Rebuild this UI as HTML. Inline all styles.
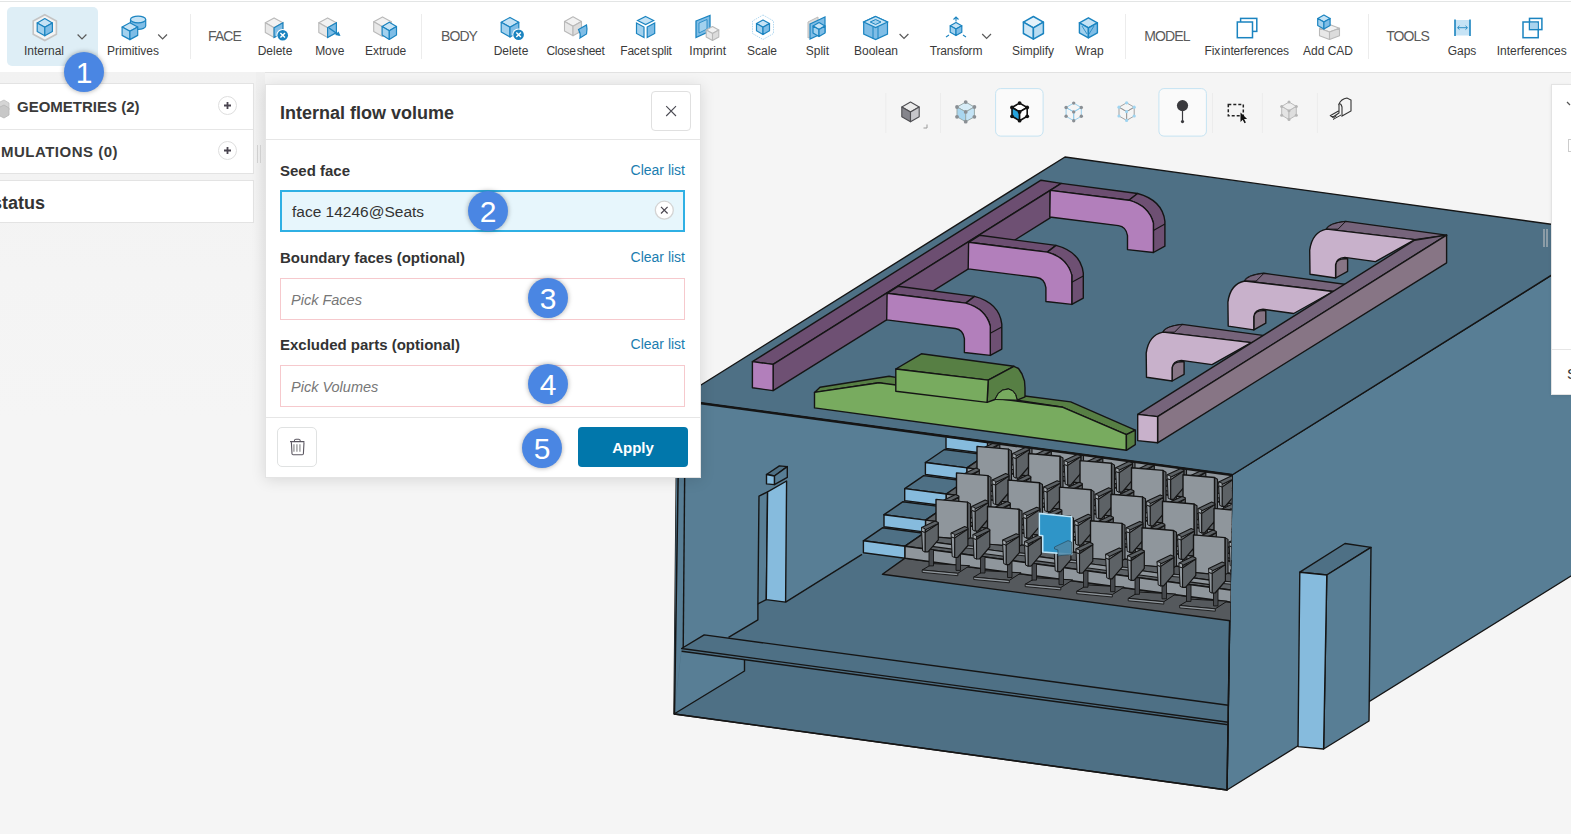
<!DOCTYPE html>
<html><head><meta charset="utf-8">
<style>
*{box-sizing:border-box;margin:0;padding:0}
html,body{width:1571px;height:834px;overflow:hidden;background:#f5f5f5;font-family:"Liberation Sans",sans-serif;color:#333}
.abs{position:absolute}
#tb{position:absolute;left:0;top:0;width:1571px;height:73px;background:#fff;border-bottom:1px solid #e2e2e2}
#tbl{position:absolute;left:0;top:1px;width:1571px;height:1px;background:#e3e5e5}
.lbl{position:absolute;top:44px;font-size:12px;color:#3a3a3a;white-space:nowrap;transform:translateX(-50%)}
.sec{position:absolute;top:28px;font-size:14px;letter-spacing:-0.9px;color:#5a5a5a;white-space:nowrap;transform:translateX(-50%)}
.sep{position:absolute;top:14px;width:1px;height:45px;background:#ececec}
.chev{position:absolute;top:33px;width:7px;height:7px;border-right:1.3px solid #666;border-bottom:1.3px solid #666;transform:rotate(45deg)}
.ico{position:absolute;top:15px;width:26px;height:26px}
#lp{position:absolute;left:0;top:72px;width:265px;height:762px;background:linear-gradient(#f2f2f2,#f4f4f4 200px,#f5f5f5 350px)}
#gut{position:absolute;left:256px;top:72px;width:9px;height:762px;background:linear-gradient(#efefef,#f2f2f2 150px,#f5f5f5 300px)}
#lpc{position:absolute;left:0;top:72px;width:265px;height:300px;overflow:hidden}
.card{position:absolute;left:0;width:254px;background:#fff;border:1px solid #e3e3e3;border-left:none}
.plus{position:absolute;width:19px;height:19px}
#dlg{position:absolute;left:265px;top:84px;width:436px;height:394px;background:#fff;border:1px solid #e4e4e4;box-shadow:0 2px 14px rgba(0,0,0,.12)}
.flabel{position:absolute;left:14px;font-size:15px;font-weight:bold;color:#333;white-space:nowrap}
.clr{position:absolute;right:15px;font-size:14px;color:#1a7db0;white-space:nowrap}
.inp{position:absolute;left:14px;width:405px;height:42px;border:1px solid #f6c9cd;background:#fff}
.ph{position:absolute;left:10px;top:13px;font-size:14.5px;font-style:italic;color:#777}
.badge{position:absolute;width:40px;height:40px;border-radius:50%;background:#4a86e3;color:#fff;font-size:30px;line-height:42px;text-align:center;box-shadow:0 0 5px rgba(0,0,0,.35)}
</style></head><body>

<svg class="abs" style="left:0;top:0" width="1571" height="834" viewBox="0 0 1571 834"><polygon points="1232.0,475.0 1618.0,233.5 1651.0,526.2 1227.0,790.0" fill="#587e95" stroke="#151515" stroke-width="1.4" stroke-linejoin="round" />
<polygon points="677.0,400.0 1065.0,157.0 1618.0,233.5 1232.0,475.0" fill="#4e7085" stroke="#151515" stroke-width="1.4" stroke-linejoin="round" />
<polygon points="677.0,400.0 1232.0,475.0 1227.0,790.0 674.0,714.0" fill="#4e7085" stroke="#151515" stroke-width="1.4" stroke-linejoin="round" />
<polygon points="677.0,400.0 1232.0,475.0 1232.0,560.0 908.0,559.0 862.0,554.3 785.6,602.1 766.3,599.6 757.9,603.8 757.9,619.8 728.5,637.4 681.6,648.5 674.0,714.0" fill="#587e95" stroke="#151515" stroke-width="0" stroke-linejoin="round" />
<polygon points="681.6,651.0 744.5,659.2 744.5,671.0 674.0,714.0" fill="#587e95" stroke="#151515" stroke-width="0" stroke-linejoin="round" />
<polyline points="744.5,659.2 744.5,671.0 674.0,714.0" fill="none" stroke="#151515" stroke-width="1.4" stroke-linejoin="round"/>
<polyline points="862.0,554.3 785.6,602.1" fill="none" stroke="#151515" stroke-width="1.4" stroke-linejoin="round"/>
<polyline points="757.9,603.8 757.9,619.8 728.5,637.4" fill="none" stroke="#151515" stroke-width="1.4" stroke-linejoin="round"/>
<polyline points="685.3,403.0 683.2,648.5" fill="none" stroke="#151515" stroke-width="1.4" stroke-linejoin="round"/>
<polygon points="681.6,648.5 704.2,634.9 1228.3,705.3 1228.2,722.2" fill="#4e7085" stroke="#151515" stroke-width="1.4" stroke-linejoin="round" />
<polyline points="681.6,651.2 1228.2,724.8" fill="none" stroke="#151515" stroke-width="1.6" stroke-linejoin="round"/>
<polyline points="679.3,400.0 674.5,714.0 1227.0,790.0 1232.0,475.0" fill="none" stroke="#151515" stroke-width="1.5" stroke-linejoin="round"/>
<polygon points="759.0,496.1 767.6,491.8 766.3,599.6 757.9,603.8" fill="#587e95" stroke="#151515" stroke-width="1.4" stroke-linejoin="round" />
<polygon points="767.6,491.8 786.6,481.0 785.6,602.1 766.3,599.6" fill="#86bbdd" stroke="#151515" stroke-width="1.4" stroke-linejoin="round" />
<polygon points="766.5,474.5 779.4,465.9 787.3,466.6 774.4,476.0" fill="#4e7085" stroke="#151515" stroke-width="1.4" stroke-linejoin="round" />
<polygon points="774.4,476.0 787.3,466.6 787.3,477.4 774.4,484.6" fill="#587e95" stroke="#151515" stroke-width="1.4" stroke-linejoin="round" />
<polygon points="766.5,474.5 774.4,476.0 774.4,484.6 766.5,483.9" fill="#86bbdd" stroke="#151515" stroke-width="1.4" stroke-linejoin="round" />
<polygon points="1299.8,572.2 1345.0,543.5 1371.0,547.4 1326.8,575.0" fill="#4e7085" stroke="#151515" stroke-width="1.4" stroke-linejoin="round" />
<polygon points="1326.8,575.0 1371.0,547.4 1369.0,721.0 1323.6,749.0" fill="#587e95" stroke="#151515" stroke-width="1.4" stroke-linejoin="round" />
<polygon points="1299.8,572.2 1326.8,575.0 1323.6,749.0 1298.0,746.6" fill="#86bbdd" stroke="#151515" stroke-width="1.4" stroke-linejoin="round" />
<defs><clipPath id="ci"><polygon points="684,403 1232,475 1228,790 674,714"/></clipPath></defs>
<g clip-path="url(#ci)"><polygon points="882.4,574.3 905.0,558.1 1240.0,603.5 1240.0,622.0" fill="#55595d" stroke="#151515" stroke-width="1.4" stroke-linejoin="round" />
<polygon points="966.6,410.3 985.6,397.3 1027.2,402.7 1008.2,415.7" fill="#4e7085" stroke="#151515" stroke-width="1.4" stroke-linejoin="round" />
<polygon points="1008.2,415.7 1027.2,402.7 1240.0,431.4 1240.0,447.0" fill="#5d6266" stroke="#151515" stroke-width="1.4" stroke-linejoin="round" />
<polygon points="966.6,410.3 1008.2,415.7 1008.2,427.7 966.6,422.3" fill="#86bbdd" stroke="#151515" stroke-width="1.4" stroke-linejoin="round" />
<polygon points="1008.2,415.7 1240.0,447.0 1240.0,459.0 1008.2,427.7" fill="#8f969c" stroke="#151515" stroke-width="1.4" stroke-linejoin="round" />
<polygon points="946.0,436.4 965.0,423.4 1006.6,428.8 987.6,441.8" fill="#4e7085" stroke="#151515" stroke-width="1.4" stroke-linejoin="round" />
<polygon points="987.6,441.8 1006.6,428.8 1240.0,460.3 1240.0,475.9" fill="#5d6266" stroke="#151515" stroke-width="1.4" stroke-linejoin="round" />
<polygon points="946.0,436.4 987.6,441.8 987.6,453.8 946.0,448.4" fill="#86bbdd" stroke="#151515" stroke-width="1.4" stroke-linejoin="round" />
<polygon points="987.6,441.8 1240.0,475.9 1240.0,487.9 987.6,453.8" fill="#8f969c" stroke="#151515" stroke-width="1.4" stroke-linejoin="round" />
<polygon points="925.4,462.5 944.4,449.5 986.0,454.9 967.0,467.9" fill="#4e7085" stroke="#151515" stroke-width="1.4" stroke-linejoin="round" />
<polygon points="967.0,467.9 986.0,454.9 1240.0,489.2 1240.0,504.8" fill="#5d6266" stroke="#151515" stroke-width="1.4" stroke-linejoin="round" />
<polygon points="925.4,462.5 967.0,467.9 967.0,479.9 925.4,474.5" fill="#86bbdd" stroke="#151515" stroke-width="1.4" stroke-linejoin="round" />
<polygon points="967.0,467.9 1240.0,504.8 1240.0,516.8 967.0,479.9" fill="#8f969c" stroke="#151515" stroke-width="1.4" stroke-linejoin="round" />
<polygon points="904.7,488.6 923.7,475.6 965.3,481.0 946.3,494.0" fill="#4e7085" stroke="#151515" stroke-width="1.4" stroke-linejoin="round" />
<polygon points="946.3,494.0 965.3,481.0 1240.0,518.1 1240.0,533.6" fill="#5d6266" stroke="#151515" stroke-width="1.4" stroke-linejoin="round" />
<polygon points="904.7,488.6 946.3,494.0 946.3,506.0 904.7,500.6" fill="#86bbdd" stroke="#151515" stroke-width="1.4" stroke-linejoin="round" />
<polygon points="946.3,494.0 1240.0,533.6 1240.0,545.6 946.3,506.0" fill="#8f969c" stroke="#151515" stroke-width="1.4" stroke-linejoin="round" />
<polygon points="884.0,514.7 903.0,501.7 944.6,507.1 925.6,520.1" fill="#4e7085" stroke="#151515" stroke-width="1.4" stroke-linejoin="round" />
<polygon points="925.6,520.1 944.6,507.1 1240.0,547.0 1240.0,562.5" fill="#5d6266" stroke="#151515" stroke-width="1.4" stroke-linejoin="round" />
<polygon points="884.0,514.7 925.6,520.1 925.6,532.1 884.0,526.7" fill="#86bbdd" stroke="#151515" stroke-width="1.4" stroke-linejoin="round" />
<polygon points="925.6,520.1 1240.0,562.5 1240.0,574.5 925.6,532.1" fill="#8f969c" stroke="#151515" stroke-width="1.4" stroke-linejoin="round" />
<polygon points="863.4,540.8 882.4,527.8 924.0,533.2 905.0,546.2" fill="#4e7085" stroke="#151515" stroke-width="1.4" stroke-linejoin="round" />
<polygon points="905.0,546.2 924.0,533.2 1240.0,575.9 1240.0,591.4" fill="#5d6266" stroke="#151515" stroke-width="1.4" stroke-linejoin="round" />
<polygon points="863.4,540.8 905.0,546.2 905.0,558.2 863.4,552.8" fill="#86bbdd" stroke="#151515" stroke-width="1.4" stroke-linejoin="round" />
<polygon points="905.0,546.2 1240.0,591.4 1240.0,603.4 905.0,558.2" fill="#8f969c" stroke="#151515" stroke-width="1.4" stroke-linejoin="round" />
<polygon points="983.7,490.5 994.5,484.1 1031.1,486.2 1019.3,493.8" fill="#55595d" stroke="#151515" stroke-width="1" stroke-linejoin="round" />
<polygon points="983.7,490.5 1019.3,493.8 1019.3,496.2 983.7,492.9" fill="#8f969c" stroke="#151515" stroke-width="0.9" stroke-linejoin="round" />
<polygon points="990.5,469.9 995.0,469.9 995.0,486.4 990.5,486.4" fill="#46494d" stroke="#151515" stroke-width="0.9" stroke-linejoin="round" />
<polygon points="1017.5,474.9 1022.0,474.9 1022.0,490.9 1017.5,490.9" fill="#46494d" stroke="#151515" stroke-width="0.9" stroke-linejoin="round" />
<polygon points="1029.0,422.6 1032.0,424.4 1032.0,457.9 1029.0,459.9" fill="#5d6266" stroke="#151515" stroke-width="1.1" stroke-linejoin="round" />
<polygon points="997.5,419.9 1029.0,422.6 1029.0,459.9 997.5,457.9" fill="#8f969c" stroke="#151515" stroke-width="1.4" stroke-linejoin="round" />
<polygon points="989.5,461.9 997.5,457.4 1028.5,460.4 1019.5,465.9" fill="#5d6266" stroke="#151515" stroke-width="1.1" stroke-linejoin="round" />
<polygon points="989.5,461.9 1019.5,465.9 1019.5,470.4 989.5,466.4" fill="#8f969c" stroke="#151515" stroke-width="1.1" stroke-linejoin="round" />
<polygon points="986.5,452.9 999.8,443.9 999.8,460.4 989.5,472.4 986.5,472.4" fill="#5d6266" stroke="#151515" stroke-width="1.2" stroke-linejoin="round" />
<polygon points="983.1,451.7 986.5,452.9 986.5,472.4 984.1,471.4" fill="#8f969c" stroke="#151515" stroke-width="1.0" stroke-linejoin="round" />
<polygon points="983.1,447.9 996.6,441.5 999.8,442.9 999.8,443.9 986.5,450.4 983.1,449.4" fill="#5d6266" stroke="#151515" stroke-width="1.1" stroke-linejoin="round" />
<polygon points="983.1,447.9 986.5,449.2 986.5,452.9 983.1,451.7" fill="#a4aaaf" stroke="#151515" stroke-width="0.9" stroke-linejoin="round" />
<polygon points="1016.1,458.5 1029.4,449.5 1029.4,466.0 1019.1,478.0 1016.1,478.0" fill="#5d6266" stroke="#151515" stroke-width="1.2" stroke-linejoin="round" />
<polygon points="1012.7,457.3 1016.1,458.5 1016.1,478.0 1013.7,477.0" fill="#8f969c" stroke="#151515" stroke-width="1.0" stroke-linejoin="round" />
<polygon points="1012.7,453.5 1026.2,447.1 1029.4,448.5 1029.4,449.5 1016.1,456.0 1012.7,455.0" fill="#5d6266" stroke="#151515" stroke-width="1.1" stroke-linejoin="round" />
<polygon points="1012.7,453.5 1016.1,454.8 1016.1,458.5 1012.7,457.3" fill="#a4aaaf" stroke="#151515" stroke-width="0.9" stroke-linejoin="round" />
<polygon points="1035.2,497.6 1046.0,491.2 1082.6,493.3 1070.8,500.9" fill="#55595d" stroke="#151515" stroke-width="1" stroke-linejoin="round" />
<polygon points="1035.2,497.6 1070.8,500.9 1070.8,503.3 1035.2,500.0" fill="#8f969c" stroke="#151515" stroke-width="0.9" stroke-linejoin="round" />
<polygon points="1042.0,477.0 1046.5,477.0 1046.5,493.5 1042.0,493.5" fill="#46494d" stroke="#151515" stroke-width="0.9" stroke-linejoin="round" />
<polygon points="1069.0,482.0 1073.5,482.0 1073.5,498.0 1069.0,498.0" fill="#46494d" stroke="#151515" stroke-width="0.9" stroke-linejoin="round" />
<polygon points="1080.5,429.7 1083.5,431.5 1083.5,465.0 1080.5,467.0" fill="#5d6266" stroke="#151515" stroke-width="1.1" stroke-linejoin="round" />
<polygon points="1049.0,427.0 1080.5,429.7 1080.5,467.0 1049.0,465.0" fill="#8f969c" stroke="#151515" stroke-width="1.4" stroke-linejoin="round" />
<polygon points="1041.0,469.0 1049.0,464.5 1080.0,467.5 1071.0,473.0" fill="#5d6266" stroke="#151515" stroke-width="1.1" stroke-linejoin="round" />
<polygon points="1041.0,469.0 1071.0,473.0 1071.0,477.5 1041.0,473.5" fill="#8f969c" stroke="#151515" stroke-width="1.1" stroke-linejoin="round" />
<polygon points="1038.0,460.0 1051.3,451.0 1051.3,467.5 1041.0,479.5 1038.0,479.5" fill="#5d6266" stroke="#151515" stroke-width="1.2" stroke-linejoin="round" />
<polygon points="1034.6,458.8 1038.0,460.0 1038.0,479.5 1035.6,478.5" fill="#8f969c" stroke="#151515" stroke-width="1.0" stroke-linejoin="round" />
<polygon points="1034.6,455.0 1048.1,448.6 1051.3,450.0 1051.3,451.0 1038.0,457.5 1034.6,456.5" fill="#5d6266" stroke="#151515" stroke-width="1.1" stroke-linejoin="round" />
<polygon points="1034.6,455.0 1038.0,456.3 1038.0,460.0 1034.6,458.8" fill="#a4aaaf" stroke="#151515" stroke-width="0.9" stroke-linejoin="round" />
<polygon points="1067.6,465.6 1080.9,456.6 1080.9,473.1 1070.6,485.1 1067.6,485.1" fill="#5d6266" stroke="#151515" stroke-width="1.2" stroke-linejoin="round" />
<polygon points="1064.2,464.4 1067.6,465.6 1067.6,485.1 1065.2,484.1" fill="#8f969c" stroke="#151515" stroke-width="1.0" stroke-linejoin="round" />
<polygon points="1064.2,460.6 1077.7,454.2 1080.9,455.6 1080.9,456.6 1067.6,463.1 1064.2,462.1" fill="#5d6266" stroke="#151515" stroke-width="1.1" stroke-linejoin="round" />
<polygon points="1064.2,460.6 1067.6,461.9 1067.6,465.6 1064.2,464.4" fill="#a4aaaf" stroke="#151515" stroke-width="0.9" stroke-linejoin="round" />
<polygon points="1086.7,504.7 1097.5,498.3 1134.1,500.4 1122.3,508.0" fill="#55595d" stroke="#151515" stroke-width="1" stroke-linejoin="round" />
<polygon points="1086.7,504.7 1122.3,508.0 1122.3,510.4 1086.7,507.1" fill="#8f969c" stroke="#151515" stroke-width="0.9" stroke-linejoin="round" />
<polygon points="1093.5,484.1 1098.0,484.1 1098.0,500.6 1093.5,500.6" fill="#46494d" stroke="#151515" stroke-width="0.9" stroke-linejoin="round" />
<polygon points="1120.5,489.1 1125.0,489.1 1125.0,505.1 1120.5,505.1" fill="#46494d" stroke="#151515" stroke-width="0.9" stroke-linejoin="round" />
<polygon points="1132.0,436.8 1135.0,438.6 1135.0,472.1 1132.0,474.1" fill="#5d6266" stroke="#151515" stroke-width="1.1" stroke-linejoin="round" />
<polygon points="1100.5,434.1 1132.0,436.8 1132.0,474.1 1100.5,472.1" fill="#8f969c" stroke="#151515" stroke-width="1.4" stroke-linejoin="round" />
<polygon points="1092.5,476.1 1100.5,471.6 1131.5,474.6 1122.5,480.1" fill="#5d6266" stroke="#151515" stroke-width="1.1" stroke-linejoin="round" />
<polygon points="1092.5,476.1 1122.5,480.1 1122.5,484.6 1092.5,480.6" fill="#8f969c" stroke="#151515" stroke-width="1.1" stroke-linejoin="round" />
<polygon points="1089.5,467.1 1102.8,458.1 1102.8,474.6 1092.5,486.6 1089.5,486.6" fill="#5d6266" stroke="#151515" stroke-width="1.2" stroke-linejoin="round" />
<polygon points="1086.1,465.9 1089.5,467.1 1089.5,486.6 1087.1,485.6" fill="#8f969c" stroke="#151515" stroke-width="1.0" stroke-linejoin="round" />
<polygon points="1086.1,462.1 1099.6,455.7 1102.8,457.1 1102.8,458.1 1089.5,464.6 1086.1,463.6" fill="#5d6266" stroke="#151515" stroke-width="1.1" stroke-linejoin="round" />
<polygon points="1086.1,462.1 1089.5,463.4 1089.5,467.1 1086.1,465.9" fill="#a4aaaf" stroke="#151515" stroke-width="0.9" stroke-linejoin="round" />
<polygon points="1119.1,472.7 1132.4,463.7 1132.4,480.2 1122.1,492.2 1119.1,492.2" fill="#5d6266" stroke="#151515" stroke-width="1.2" stroke-linejoin="round" />
<polygon points="1115.7,471.5 1119.1,472.7 1119.1,492.2 1116.7,491.2" fill="#8f969c" stroke="#151515" stroke-width="1.0" stroke-linejoin="round" />
<polygon points="1115.7,467.7 1129.2,461.3 1132.4,462.7 1132.4,463.7 1119.1,470.2 1115.7,469.2" fill="#5d6266" stroke="#151515" stroke-width="1.1" stroke-linejoin="round" />
<polygon points="1115.7,467.7 1119.1,469.0 1119.1,472.7 1115.7,471.5" fill="#a4aaaf" stroke="#151515" stroke-width="0.9" stroke-linejoin="round" />
<polygon points="1138.2,511.8 1149.0,505.4 1185.6,507.5 1173.8,515.1" fill="#55595d" stroke="#151515" stroke-width="1" stroke-linejoin="round" />
<polygon points="1138.2,511.8 1173.8,515.1 1173.8,517.5 1138.2,514.2" fill="#8f969c" stroke="#151515" stroke-width="0.9" stroke-linejoin="round" />
<polygon points="1145.0,491.2 1149.5,491.2 1149.5,507.7 1145.0,507.7" fill="#46494d" stroke="#151515" stroke-width="0.9" stroke-linejoin="round" />
<polygon points="1172.0,496.2 1176.5,496.2 1176.5,512.2 1172.0,512.2" fill="#46494d" stroke="#151515" stroke-width="0.9" stroke-linejoin="round" />
<polygon points="1183.5,443.9 1186.5,445.7 1186.5,479.2 1183.5,481.2" fill="#5d6266" stroke="#151515" stroke-width="1.1" stroke-linejoin="round" />
<polygon points="1152.0,441.2 1183.5,443.9 1183.5,481.2 1152.0,479.2" fill="#8f969c" stroke="#151515" stroke-width="1.4" stroke-linejoin="round" />
<polygon points="1144.0,483.2 1152.0,478.7 1183.0,481.7 1174.0,487.2" fill="#5d6266" stroke="#151515" stroke-width="1.1" stroke-linejoin="round" />
<polygon points="1144.0,483.2 1174.0,487.2 1174.0,491.7 1144.0,487.7" fill="#8f969c" stroke="#151515" stroke-width="1.1" stroke-linejoin="round" />
<polygon points="1141.0,474.2 1154.3,465.2 1154.3,481.7 1144.0,493.7 1141.0,493.7" fill="#5d6266" stroke="#151515" stroke-width="1.2" stroke-linejoin="round" />
<polygon points="1137.6,473.0 1141.0,474.2 1141.0,493.7 1138.6,492.7" fill="#8f969c" stroke="#151515" stroke-width="1.0" stroke-linejoin="round" />
<polygon points="1137.6,469.2 1151.1,462.8 1154.3,464.2 1154.3,465.2 1141.0,471.7 1137.6,470.7" fill="#5d6266" stroke="#151515" stroke-width="1.1" stroke-linejoin="round" />
<polygon points="1137.6,469.2 1141.0,470.5 1141.0,474.2 1137.6,473.0" fill="#a4aaaf" stroke="#151515" stroke-width="0.9" stroke-linejoin="round" />
<polygon points="1170.6,479.8 1183.9,470.8 1183.9,487.3 1173.6,499.3 1170.6,499.3" fill="#5d6266" stroke="#151515" stroke-width="1.2" stroke-linejoin="round" />
<polygon points="1167.2,478.6 1170.6,479.8 1170.6,499.3 1168.2,498.3" fill="#8f969c" stroke="#151515" stroke-width="1.0" stroke-linejoin="round" />
<polygon points="1167.2,474.8 1180.7,468.4 1183.9,469.8 1183.9,470.8 1170.6,477.3 1167.2,476.3" fill="#5d6266" stroke="#151515" stroke-width="1.1" stroke-linejoin="round" />
<polygon points="1167.2,474.8 1170.6,476.1 1170.6,479.8 1167.2,478.6" fill="#a4aaaf" stroke="#151515" stroke-width="0.9" stroke-linejoin="round" />
<polygon points="1189.7,518.9 1200.5,512.5 1237.1,514.6 1225.3,522.2" fill="#55595d" stroke="#151515" stroke-width="1" stroke-linejoin="round" />
<polygon points="1189.7,518.9 1225.3,522.2 1225.3,524.6 1189.7,521.3" fill="#8f969c" stroke="#151515" stroke-width="0.9" stroke-linejoin="round" />
<polygon points="1196.5,498.3 1201.0,498.3 1201.0,514.8 1196.5,514.8" fill="#46494d" stroke="#151515" stroke-width="0.9" stroke-linejoin="round" />
<polygon points="1223.5,503.3 1228.0,503.3 1228.0,519.3 1223.5,519.3" fill="#46494d" stroke="#151515" stroke-width="0.9" stroke-linejoin="round" />
<polygon points="1235.0,451.0 1238.0,452.8 1238.0,486.3 1235.0,488.3" fill="#5d6266" stroke="#151515" stroke-width="1.1" stroke-linejoin="round" />
<polygon points="1203.5,448.3 1235.0,451.0 1235.0,488.3 1203.5,486.3" fill="#8f969c" stroke="#151515" stroke-width="1.4" stroke-linejoin="round" />
<polygon points="1195.5,490.3 1203.5,485.8 1234.5,488.8 1225.5,494.3" fill="#5d6266" stroke="#151515" stroke-width="1.1" stroke-linejoin="round" />
<polygon points="1195.5,490.3 1225.5,494.3 1225.5,498.8 1195.5,494.8" fill="#8f969c" stroke="#151515" stroke-width="1.1" stroke-linejoin="round" />
<polygon points="1192.5,481.3 1205.8,472.3 1205.8,488.8 1195.5,500.8 1192.5,500.8" fill="#5d6266" stroke="#151515" stroke-width="1.2" stroke-linejoin="round" />
<polygon points="1189.1,480.1 1192.5,481.3 1192.5,500.8 1190.1,499.8" fill="#8f969c" stroke="#151515" stroke-width="1.0" stroke-linejoin="round" />
<polygon points="1189.1,476.3 1202.6,469.9 1205.8,471.3 1205.8,472.3 1192.5,478.8 1189.1,477.8" fill="#5d6266" stroke="#151515" stroke-width="1.1" stroke-linejoin="round" />
<polygon points="1189.1,476.3 1192.5,477.6 1192.5,481.3 1189.1,480.1" fill="#a4aaaf" stroke="#151515" stroke-width="0.9" stroke-linejoin="round" />
<polygon points="1222.1,486.9 1235.4,477.9 1235.4,494.4 1225.1,506.4 1222.1,506.4" fill="#5d6266" stroke="#151515" stroke-width="1.2" stroke-linejoin="round" />
<polygon points="1218.7,485.7 1222.1,486.9 1222.1,506.4 1219.7,505.4" fill="#8f969c" stroke="#151515" stroke-width="1.0" stroke-linejoin="round" />
<polygon points="1218.7,481.9 1232.2,475.5 1235.4,476.9 1235.4,477.9 1222.1,484.4 1218.7,483.4" fill="#5d6266" stroke="#151515" stroke-width="1.1" stroke-linejoin="round" />
<polygon points="1218.7,481.9 1222.1,483.2 1222.1,486.9 1218.7,485.7" fill="#a4aaaf" stroke="#151515" stroke-width="0.9" stroke-linejoin="round" />
<polygon points="1241.2,526.0 1252.0,519.6 1288.6,521.7 1276.8,529.3" fill="#55595d" stroke="#151515" stroke-width="1" stroke-linejoin="round" />
<polygon points="1241.2,526.0 1276.8,529.3 1276.8,531.7 1241.2,528.4" fill="#8f969c" stroke="#151515" stroke-width="0.9" stroke-linejoin="round" />
<polygon points="1248.0,505.4 1252.5,505.4 1252.5,521.9 1248.0,521.9" fill="#46494d" stroke="#151515" stroke-width="0.9" stroke-linejoin="round" />
<polygon points="1275.0,510.4 1279.5,510.4 1279.5,526.4 1275.0,526.4" fill="#46494d" stroke="#151515" stroke-width="0.9" stroke-linejoin="round" />
<polygon points="1286.5,458.1 1289.5,459.9 1289.5,493.4 1286.5,495.4" fill="#5d6266" stroke="#151515" stroke-width="1.1" stroke-linejoin="round" />
<polygon points="1255.0,455.4 1286.5,458.1 1286.5,495.4 1255.0,493.4" fill="#8f969c" stroke="#151515" stroke-width="1.4" stroke-linejoin="round" />
<polygon points="1247.0,497.4 1255.0,492.9 1286.0,495.9 1277.0,501.4" fill="#5d6266" stroke="#151515" stroke-width="1.1" stroke-linejoin="round" />
<polygon points="1247.0,497.4 1277.0,501.4 1277.0,505.9 1247.0,501.9" fill="#8f969c" stroke="#151515" stroke-width="1.1" stroke-linejoin="round" />
<polygon points="1244.0,488.4 1257.3,479.4 1257.3,495.9 1247.0,507.9 1244.0,507.9" fill="#5d6266" stroke="#151515" stroke-width="1.2" stroke-linejoin="round" />
<polygon points="1240.6,487.2 1244.0,488.4 1244.0,507.9 1241.6,506.9" fill="#8f969c" stroke="#151515" stroke-width="1.0" stroke-linejoin="round" />
<polygon points="1240.6,483.4 1254.1,477.0 1257.3,478.4 1257.3,479.4 1244.0,485.9 1240.6,484.9" fill="#5d6266" stroke="#151515" stroke-width="1.1" stroke-linejoin="round" />
<polygon points="1240.6,483.4 1244.0,484.7 1244.0,488.4 1240.6,487.2" fill="#a4aaaf" stroke="#151515" stroke-width="0.9" stroke-linejoin="round" />
<polygon points="1273.6,494.0 1286.9,485.0 1286.9,501.5 1276.6,513.5 1273.6,513.5" fill="#5d6266" stroke="#151515" stroke-width="1.2" stroke-linejoin="round" />
<polygon points="1270.2,492.8 1273.6,494.0 1273.6,513.5 1271.2,512.5" fill="#8f969c" stroke="#151515" stroke-width="1.0" stroke-linejoin="round" />
<polygon points="1270.2,489.0 1283.7,482.6 1286.9,484.0 1286.9,485.0 1273.6,491.5 1270.2,490.5" fill="#5d6266" stroke="#151515" stroke-width="1.1" stroke-linejoin="round" />
<polygon points="1270.2,489.0 1273.6,490.3 1273.6,494.0 1270.2,492.8" fill="#a4aaaf" stroke="#151515" stroke-width="0.9" stroke-linejoin="round" />
<polygon points="1292.7,533.1 1303.5,526.7 1340.1,528.8 1328.3,536.4" fill="#55595d" stroke="#151515" stroke-width="1" stroke-linejoin="round" />
<polygon points="1292.7,533.1 1328.3,536.4 1328.3,538.8 1292.7,535.5" fill="#8f969c" stroke="#151515" stroke-width="0.9" stroke-linejoin="round" />
<polygon points="1299.5,512.5 1304.0,512.5 1304.0,529.0 1299.5,529.0" fill="#46494d" stroke="#151515" stroke-width="0.9" stroke-linejoin="round" />
<polygon points="1326.5,517.5 1331.0,517.5 1331.0,533.5 1326.5,533.5" fill="#46494d" stroke="#151515" stroke-width="0.9" stroke-linejoin="round" />
<polygon points="1338.0,465.2 1341.0,467.0 1341.0,500.5 1338.0,502.5" fill="#5d6266" stroke="#151515" stroke-width="1.1" stroke-linejoin="round" />
<polygon points="1306.5,462.5 1338.0,465.2 1338.0,502.5 1306.5,500.5" fill="#8f969c" stroke="#151515" stroke-width="1.4" stroke-linejoin="round" />
<polygon points="1298.5,504.5 1306.5,500.0 1337.5,503.0 1328.5,508.5" fill="#5d6266" stroke="#151515" stroke-width="1.1" stroke-linejoin="round" />
<polygon points="1298.5,504.5 1328.5,508.5 1328.5,513.0 1298.5,509.0" fill="#8f969c" stroke="#151515" stroke-width="1.1" stroke-linejoin="round" />
<polygon points="1295.5,495.5 1308.8,486.5 1308.8,503.0 1298.5,515.0 1295.5,515.0" fill="#5d6266" stroke="#151515" stroke-width="1.2" stroke-linejoin="round" />
<polygon points="1292.1,494.3 1295.5,495.5 1295.5,515.0 1293.1,514.0" fill="#8f969c" stroke="#151515" stroke-width="1.0" stroke-linejoin="round" />
<polygon points="1292.1,490.5 1305.6,484.1 1308.8,485.5 1308.8,486.5 1295.5,493.0 1292.1,492.0" fill="#5d6266" stroke="#151515" stroke-width="1.1" stroke-linejoin="round" />
<polygon points="1292.1,490.5 1295.5,491.8 1295.5,495.5 1292.1,494.3" fill="#a4aaaf" stroke="#151515" stroke-width="0.9" stroke-linejoin="round" />
<polygon points="1325.1,501.1 1338.4,492.1 1338.4,508.6 1328.1,520.6 1325.1,520.6" fill="#5d6266" stroke="#151515" stroke-width="1.2" stroke-linejoin="round" />
<polygon points="1321.7,499.9 1325.1,501.1 1325.1,520.6 1322.7,519.6" fill="#8f969c" stroke="#151515" stroke-width="1.0" stroke-linejoin="round" />
<polygon points="1321.7,496.1 1335.2,489.7 1338.4,491.1 1338.4,492.1 1325.1,498.6 1321.7,497.6" fill="#5d6266" stroke="#151515" stroke-width="1.1" stroke-linejoin="round" />
<polygon points="1321.7,496.1 1325.1,497.4 1325.1,501.1 1321.7,499.9" fill="#a4aaaf" stroke="#151515" stroke-width="0.9" stroke-linejoin="round" />
<polygon points="963.2,517.0 974.0,510.6 1010.6,512.7 998.8,520.3" fill="#55595d" stroke="#151515" stroke-width="1" stroke-linejoin="round" />
<polygon points="963.2,517.0 998.8,520.3 998.8,522.7 963.2,519.4" fill="#8f969c" stroke="#151515" stroke-width="0.9" stroke-linejoin="round" />
<polygon points="970.0,496.4 974.5,496.4 974.5,512.9 970.0,512.9" fill="#46494d" stroke="#151515" stroke-width="0.9" stroke-linejoin="round" />
<polygon points="997.0,501.4 1001.5,501.4 1001.5,517.4 997.0,517.4" fill="#46494d" stroke="#151515" stroke-width="0.9" stroke-linejoin="round" />
<polygon points="1008.5,449.1 1011.5,450.9 1011.5,484.4 1008.5,486.4" fill="#5d6266" stroke="#151515" stroke-width="1.1" stroke-linejoin="round" />
<polygon points="977.0,446.4 1008.5,449.1 1008.5,486.4 977.0,484.4" fill="#8f969c" stroke="#151515" stroke-width="1.4" stroke-linejoin="round" />
<polygon points="969.0,488.4 977.0,483.9 1008.0,486.9 999.0,492.4" fill="#5d6266" stroke="#151515" stroke-width="1.1" stroke-linejoin="round" />
<polygon points="969.0,488.4 999.0,492.4 999.0,496.9 969.0,492.9" fill="#8f969c" stroke="#151515" stroke-width="1.1" stroke-linejoin="round" />
<polygon points="966.0,479.4 979.3,470.4 979.3,486.9 969.0,498.9 966.0,498.9" fill="#5d6266" stroke="#151515" stroke-width="1.2" stroke-linejoin="round" />
<polygon points="962.6,478.2 966.0,479.4 966.0,498.9 963.6,497.9" fill="#8f969c" stroke="#151515" stroke-width="1.0" stroke-linejoin="round" />
<polygon points="962.6,474.4 976.1,468.0 979.3,469.4 979.3,470.4 966.0,476.9 962.6,475.9" fill="#5d6266" stroke="#151515" stroke-width="1.1" stroke-linejoin="round" />
<polygon points="962.6,474.4 966.0,475.7 966.0,479.4 962.6,478.2" fill="#a4aaaf" stroke="#151515" stroke-width="0.9" stroke-linejoin="round" />
<polygon points="995.6,485.0 1008.9,476.0 1008.9,492.5 998.6,504.5 995.6,504.5" fill="#5d6266" stroke="#151515" stroke-width="1.2" stroke-linejoin="round" />
<polygon points="992.2,483.8 995.6,485.0 995.6,504.5 993.2,503.5" fill="#8f969c" stroke="#151515" stroke-width="1.0" stroke-linejoin="round" />
<polygon points="992.2,480.0 1005.7,473.6 1008.9,475.0 1008.9,476.0 995.6,482.5 992.2,481.5" fill="#5d6266" stroke="#151515" stroke-width="1.1" stroke-linejoin="round" />
<polygon points="992.2,480.0 995.6,481.3 995.6,485.0 992.2,483.8" fill="#a4aaaf" stroke="#151515" stroke-width="0.9" stroke-linejoin="round" />
<polygon points="1014.7,524.1 1025.5,517.7 1062.1,519.8 1050.3,527.4" fill="#55595d" stroke="#151515" stroke-width="1" stroke-linejoin="round" />
<polygon points="1014.7,524.1 1050.3,527.4 1050.3,529.8 1014.7,526.5" fill="#8f969c" stroke="#151515" stroke-width="0.9" stroke-linejoin="round" />
<polygon points="1021.5,503.5 1026.0,503.5 1026.0,520.0 1021.5,520.0" fill="#46494d" stroke="#151515" stroke-width="0.9" stroke-linejoin="round" />
<polygon points="1048.5,508.5 1053.0,508.5 1053.0,524.5 1048.5,524.5" fill="#46494d" stroke="#151515" stroke-width="0.9" stroke-linejoin="round" />
<polygon points="1060.0,456.2 1063.0,458.0 1063.0,491.5 1060.0,493.5" fill="#5d6266" stroke="#151515" stroke-width="1.1" stroke-linejoin="round" />
<polygon points="1028.5,453.5 1060.0,456.2 1060.0,493.5 1028.5,491.5" fill="#8f969c" stroke="#151515" stroke-width="1.4" stroke-linejoin="round" />
<polygon points="1020.5,495.5 1028.5,491.0 1059.5,494.0 1050.5,499.5" fill="#5d6266" stroke="#151515" stroke-width="1.1" stroke-linejoin="round" />
<polygon points="1020.5,495.5 1050.5,499.5 1050.5,504.0 1020.5,500.0" fill="#8f969c" stroke="#151515" stroke-width="1.1" stroke-linejoin="round" />
<polygon points="1017.5,486.5 1030.8,477.5 1030.8,494.0 1020.5,506.0 1017.5,506.0" fill="#5d6266" stroke="#151515" stroke-width="1.2" stroke-linejoin="round" />
<polygon points="1014.1,485.3 1017.5,486.5 1017.5,506.0 1015.1,505.0" fill="#8f969c" stroke="#151515" stroke-width="1.0" stroke-linejoin="round" />
<polygon points="1014.1,481.5 1027.6,475.1 1030.8,476.5 1030.8,477.5 1017.5,484.0 1014.1,483.0" fill="#5d6266" stroke="#151515" stroke-width="1.1" stroke-linejoin="round" />
<polygon points="1014.1,481.5 1017.5,482.8 1017.5,486.5 1014.1,485.3" fill="#a4aaaf" stroke="#151515" stroke-width="0.9" stroke-linejoin="round" />
<polygon points="1047.1,492.1 1060.4,483.1 1060.4,499.6 1050.1,511.6 1047.1,511.6" fill="#5d6266" stroke="#151515" stroke-width="1.2" stroke-linejoin="round" />
<polygon points="1043.7,490.9 1047.1,492.1 1047.1,511.6 1044.7,510.6" fill="#8f969c" stroke="#151515" stroke-width="1.0" stroke-linejoin="round" />
<polygon points="1043.7,487.1 1057.2,480.7 1060.4,482.1 1060.4,483.1 1047.1,489.6 1043.7,488.6" fill="#5d6266" stroke="#151515" stroke-width="1.1" stroke-linejoin="round" />
<polygon points="1043.7,487.1 1047.1,488.4 1047.1,492.1 1043.7,490.9" fill="#a4aaaf" stroke="#151515" stroke-width="0.9" stroke-linejoin="round" />
<polygon points="1066.2,531.2 1077.0,524.8 1113.6,526.9 1101.8,534.5" fill="#55595d" stroke="#151515" stroke-width="1" stroke-linejoin="round" />
<polygon points="1066.2,531.2 1101.8,534.5 1101.8,536.9 1066.2,533.6" fill="#8f969c" stroke="#151515" stroke-width="0.9" stroke-linejoin="round" />
<polygon points="1073.0,510.6 1077.5,510.6 1077.5,527.1 1073.0,527.1" fill="#46494d" stroke="#151515" stroke-width="0.9" stroke-linejoin="round" />
<polygon points="1100.0,515.6 1104.5,515.6 1104.5,531.6 1100.0,531.6" fill="#46494d" stroke="#151515" stroke-width="0.9" stroke-linejoin="round" />
<polygon points="1111.5,463.3 1114.5,465.1 1114.5,498.6 1111.5,500.6" fill="#5d6266" stroke="#151515" stroke-width="1.1" stroke-linejoin="round" />
<polygon points="1080.0,460.6 1111.5,463.3 1111.5,500.6 1080.0,498.6" fill="#8f969c" stroke="#151515" stroke-width="1.4" stroke-linejoin="round" />
<polygon points="1072.0,502.6 1080.0,498.1 1111.0,501.1 1102.0,506.6" fill="#5d6266" stroke="#151515" stroke-width="1.1" stroke-linejoin="round" />
<polygon points="1072.0,502.6 1102.0,506.6 1102.0,511.1 1072.0,507.1" fill="#8f969c" stroke="#151515" stroke-width="1.1" stroke-linejoin="round" />
<polygon points="1069.0,493.6 1082.3,484.6 1082.3,501.1 1072.0,513.1 1069.0,513.1" fill="#5d6266" stroke="#151515" stroke-width="1.2" stroke-linejoin="round" />
<polygon points="1065.6,492.4 1069.0,493.6 1069.0,513.1 1066.6,512.1" fill="#8f969c" stroke="#151515" stroke-width="1.0" stroke-linejoin="round" />
<polygon points="1065.6,488.6 1079.1,482.2 1082.3,483.6 1082.3,484.6 1069.0,491.1 1065.6,490.1" fill="#5d6266" stroke="#151515" stroke-width="1.1" stroke-linejoin="round" />
<polygon points="1065.6,488.6 1069.0,489.9 1069.0,493.6 1065.6,492.4" fill="#a4aaaf" stroke="#151515" stroke-width="0.9" stroke-linejoin="round" />
<polygon points="1098.6,499.2 1111.9,490.2 1111.9,506.7 1101.6,518.7 1098.6,518.7" fill="#5d6266" stroke="#151515" stroke-width="1.2" stroke-linejoin="round" />
<polygon points="1095.2,498.0 1098.6,499.2 1098.6,518.7 1096.2,517.7" fill="#8f969c" stroke="#151515" stroke-width="1.0" stroke-linejoin="round" />
<polygon points="1095.2,494.2 1108.7,487.8 1111.9,489.2 1111.9,490.2 1098.6,496.7 1095.2,495.7" fill="#5d6266" stroke="#151515" stroke-width="1.1" stroke-linejoin="round" />
<polygon points="1095.2,494.2 1098.6,495.5 1098.6,499.2 1095.2,498.0" fill="#a4aaaf" stroke="#151515" stroke-width="0.9" stroke-linejoin="round" />
<polygon points="1117.7,538.3 1128.5,531.9 1165.1,534.0 1153.3,541.6" fill="#55595d" stroke="#151515" stroke-width="1" stroke-linejoin="round" />
<polygon points="1117.7,538.3 1153.3,541.6 1153.3,544.0 1117.7,540.7" fill="#8f969c" stroke="#151515" stroke-width="0.9" stroke-linejoin="round" />
<polygon points="1124.5,517.7 1129.0,517.7 1129.0,534.2 1124.5,534.2" fill="#46494d" stroke="#151515" stroke-width="0.9" stroke-linejoin="round" />
<polygon points="1151.5,522.7 1156.0,522.7 1156.0,538.7 1151.5,538.7" fill="#46494d" stroke="#151515" stroke-width="0.9" stroke-linejoin="round" />
<polygon points="1163.0,470.4 1166.0,472.2 1166.0,505.7 1163.0,507.7" fill="#5d6266" stroke="#151515" stroke-width="1.1" stroke-linejoin="round" />
<polygon points="1131.5,467.7 1163.0,470.4 1163.0,507.7 1131.5,505.7" fill="#8f969c" stroke="#151515" stroke-width="1.4" stroke-linejoin="round" />
<polygon points="1123.5,509.7 1131.5,505.2 1162.5,508.2 1153.5,513.7" fill="#5d6266" stroke="#151515" stroke-width="1.1" stroke-linejoin="round" />
<polygon points="1123.5,509.7 1153.5,513.7 1153.5,518.2 1123.5,514.2" fill="#8f969c" stroke="#151515" stroke-width="1.1" stroke-linejoin="round" />
<polygon points="1120.5,500.7 1133.8,491.7 1133.8,508.2 1123.5,520.2 1120.5,520.2" fill="#5d6266" stroke="#151515" stroke-width="1.2" stroke-linejoin="round" />
<polygon points="1117.1,499.5 1120.5,500.7 1120.5,520.2 1118.1,519.2" fill="#8f969c" stroke="#151515" stroke-width="1.0" stroke-linejoin="round" />
<polygon points="1117.1,495.7 1130.6,489.3 1133.8,490.7 1133.8,491.7 1120.5,498.2 1117.1,497.2" fill="#5d6266" stroke="#151515" stroke-width="1.1" stroke-linejoin="round" />
<polygon points="1117.1,495.7 1120.5,497.0 1120.5,500.7 1117.1,499.5" fill="#a4aaaf" stroke="#151515" stroke-width="0.9" stroke-linejoin="round" />
<polygon points="1150.1,506.3 1163.4,497.3 1163.4,513.8 1153.1,525.8 1150.1,525.8" fill="#5d6266" stroke="#151515" stroke-width="1.2" stroke-linejoin="round" />
<polygon points="1146.7,505.1 1150.1,506.3 1150.1,525.8 1147.7,524.8" fill="#8f969c" stroke="#151515" stroke-width="1.0" stroke-linejoin="round" />
<polygon points="1146.7,501.3 1160.2,494.9 1163.4,496.3 1163.4,497.3 1150.1,503.8 1146.7,502.8" fill="#5d6266" stroke="#151515" stroke-width="1.1" stroke-linejoin="round" />
<polygon points="1146.7,501.3 1150.1,502.6 1150.1,506.3 1146.7,505.1" fill="#a4aaaf" stroke="#151515" stroke-width="0.9" stroke-linejoin="round" />
<polygon points="1169.2,545.4 1180.0,539.0 1216.6,541.1 1204.8,548.7" fill="#55595d" stroke="#151515" stroke-width="1" stroke-linejoin="round" />
<polygon points="1169.2,545.4 1204.8,548.7 1204.8,551.1 1169.2,547.8" fill="#8f969c" stroke="#151515" stroke-width="0.9" stroke-linejoin="round" />
<polygon points="1176.0,524.8 1180.5,524.8 1180.5,541.3 1176.0,541.3" fill="#46494d" stroke="#151515" stroke-width="0.9" stroke-linejoin="round" />
<polygon points="1203.0,529.8 1207.5,529.8 1207.5,545.8 1203.0,545.8" fill="#46494d" stroke="#151515" stroke-width="0.9" stroke-linejoin="round" />
<polygon points="1214.5,477.5 1217.5,479.3 1217.5,512.8 1214.5,514.8" fill="#5d6266" stroke="#151515" stroke-width="1.1" stroke-linejoin="round" />
<polygon points="1183.0,474.8 1214.5,477.5 1214.5,514.8 1183.0,512.8" fill="#8f969c" stroke="#151515" stroke-width="1.4" stroke-linejoin="round" />
<polygon points="1175.0,516.8 1183.0,512.3 1214.0,515.3 1205.0,520.8" fill="#5d6266" stroke="#151515" stroke-width="1.1" stroke-linejoin="round" />
<polygon points="1175.0,516.8 1205.0,520.8 1205.0,525.3 1175.0,521.3" fill="#8f969c" stroke="#151515" stroke-width="1.1" stroke-linejoin="round" />
<polygon points="1172.0,507.8 1185.3,498.8 1185.3,515.3 1175.0,527.3 1172.0,527.3" fill="#5d6266" stroke="#151515" stroke-width="1.2" stroke-linejoin="round" />
<polygon points="1168.6,506.6 1172.0,507.8 1172.0,527.3 1169.6,526.3" fill="#8f969c" stroke="#151515" stroke-width="1.0" stroke-linejoin="round" />
<polygon points="1168.6,502.8 1182.1,496.4 1185.3,497.8 1185.3,498.8 1172.0,505.3 1168.6,504.3" fill="#5d6266" stroke="#151515" stroke-width="1.1" stroke-linejoin="round" />
<polygon points="1168.6,502.8 1172.0,504.1 1172.0,507.8 1168.6,506.6" fill="#a4aaaf" stroke="#151515" stroke-width="0.9" stroke-linejoin="round" />
<polygon points="1201.6,513.4 1214.9,504.4 1214.9,520.9 1204.6,532.9 1201.6,532.9" fill="#5d6266" stroke="#151515" stroke-width="1.2" stroke-linejoin="round" />
<polygon points="1198.2,512.2 1201.6,513.4 1201.6,532.9 1199.2,531.9" fill="#8f969c" stroke="#151515" stroke-width="1.0" stroke-linejoin="round" />
<polygon points="1198.2,508.4 1211.7,502.0 1214.9,503.4 1214.9,504.4 1201.6,510.9 1198.2,509.9" fill="#5d6266" stroke="#151515" stroke-width="1.1" stroke-linejoin="round" />
<polygon points="1198.2,508.4 1201.6,509.7 1201.6,513.4 1198.2,512.2" fill="#a4aaaf" stroke="#151515" stroke-width="0.9" stroke-linejoin="round" />
<polygon points="1220.7,552.5 1231.5,546.1 1268.1,548.2 1256.3,555.8" fill="#55595d" stroke="#151515" stroke-width="1" stroke-linejoin="round" />
<polygon points="1220.7,552.5 1256.3,555.8 1256.3,558.2 1220.7,554.9" fill="#8f969c" stroke="#151515" stroke-width="0.9" stroke-linejoin="round" />
<polygon points="1227.5,531.9 1232.0,531.9 1232.0,548.4 1227.5,548.4" fill="#46494d" stroke="#151515" stroke-width="0.9" stroke-linejoin="round" />
<polygon points="1254.5,536.9 1259.0,536.9 1259.0,552.9 1254.5,552.9" fill="#46494d" stroke="#151515" stroke-width="0.9" stroke-linejoin="round" />
<polygon points="1266.0,484.6 1269.0,486.4 1269.0,519.9 1266.0,521.9" fill="#5d6266" stroke="#151515" stroke-width="1.1" stroke-linejoin="round" />
<polygon points="1234.5,481.9 1266.0,484.6 1266.0,521.9 1234.5,519.9" fill="#8f969c" stroke="#151515" stroke-width="1.4" stroke-linejoin="round" />
<polygon points="1226.5,523.9 1234.5,519.4 1265.5,522.4 1256.5,527.9" fill="#5d6266" stroke="#151515" stroke-width="1.1" stroke-linejoin="round" />
<polygon points="1226.5,523.9 1256.5,527.9 1256.5,532.4 1226.5,528.4" fill="#8f969c" stroke="#151515" stroke-width="1.1" stroke-linejoin="round" />
<polygon points="1223.5,514.9 1236.8,505.9 1236.8,522.4 1226.5,534.4 1223.5,534.4" fill="#5d6266" stroke="#151515" stroke-width="1.2" stroke-linejoin="round" />
<polygon points="1220.1,513.7 1223.5,514.9 1223.5,534.4 1221.1,533.4" fill="#8f969c" stroke="#151515" stroke-width="1.0" stroke-linejoin="round" />
<polygon points="1220.1,509.9 1233.6,503.5 1236.8,504.9 1236.8,505.9 1223.5,512.4 1220.1,511.4" fill="#5d6266" stroke="#151515" stroke-width="1.1" stroke-linejoin="round" />
<polygon points="1220.1,509.9 1223.5,511.2 1223.5,514.9 1220.1,513.7" fill="#a4aaaf" stroke="#151515" stroke-width="0.9" stroke-linejoin="round" />
<polygon points="1253.1,520.5 1266.4,511.5 1266.4,528.0 1256.1,540.0 1253.1,540.0" fill="#5d6266" stroke="#151515" stroke-width="1.2" stroke-linejoin="round" />
<polygon points="1249.7,519.3 1253.1,520.5 1253.1,540.0 1250.7,539.0" fill="#8f969c" stroke="#151515" stroke-width="1.0" stroke-linejoin="round" />
<polygon points="1249.7,515.5 1263.2,509.1 1266.4,510.5 1266.4,511.5 1253.1,518.0 1249.7,517.0" fill="#5d6266" stroke="#151515" stroke-width="1.1" stroke-linejoin="round" />
<polygon points="1249.7,515.5 1253.1,516.8 1253.1,520.5 1249.7,519.3" fill="#a4aaaf" stroke="#151515" stroke-width="0.9" stroke-linejoin="round" />
<polygon points="1272.2,559.6 1283.0,553.2 1319.6,555.3 1307.8,562.9" fill="#55595d" stroke="#151515" stroke-width="1" stroke-linejoin="round" />
<polygon points="1272.2,559.6 1307.8,562.9 1307.8,565.3 1272.2,562.0" fill="#8f969c" stroke="#151515" stroke-width="0.9" stroke-linejoin="round" />
<polygon points="1279.0,539.0 1283.5,539.0 1283.5,555.5 1279.0,555.5" fill="#46494d" stroke="#151515" stroke-width="0.9" stroke-linejoin="round" />
<polygon points="1306.0,544.0 1310.5,544.0 1310.5,560.0 1306.0,560.0" fill="#46494d" stroke="#151515" stroke-width="0.9" stroke-linejoin="round" />
<polygon points="1317.5,491.7 1320.5,493.5 1320.5,527.0 1317.5,529.0" fill="#5d6266" stroke="#151515" stroke-width="1.1" stroke-linejoin="round" />
<polygon points="1286.0,489.0 1317.5,491.7 1317.5,529.0 1286.0,527.0" fill="#8f969c" stroke="#151515" stroke-width="1.4" stroke-linejoin="round" />
<polygon points="1278.0,531.0 1286.0,526.5 1317.0,529.5 1308.0,535.0" fill="#5d6266" stroke="#151515" stroke-width="1.1" stroke-linejoin="round" />
<polygon points="1278.0,531.0 1308.0,535.0 1308.0,539.5 1278.0,535.5" fill="#8f969c" stroke="#151515" stroke-width="1.1" stroke-linejoin="round" />
<polygon points="1275.0,522.0 1288.3,513.0 1288.3,529.5 1278.0,541.5 1275.0,541.5" fill="#5d6266" stroke="#151515" stroke-width="1.2" stroke-linejoin="round" />
<polygon points="1271.6,520.8 1275.0,522.0 1275.0,541.5 1272.6,540.5" fill="#8f969c" stroke="#151515" stroke-width="1.0" stroke-linejoin="round" />
<polygon points="1271.6,517.0 1285.1,510.6 1288.3,512.0 1288.3,513.0 1275.0,519.5 1271.6,518.5" fill="#5d6266" stroke="#151515" stroke-width="1.1" stroke-linejoin="round" />
<polygon points="1271.6,517.0 1275.0,518.3 1275.0,522.0 1271.6,520.8" fill="#a4aaaf" stroke="#151515" stroke-width="0.9" stroke-linejoin="round" />
<polygon points="1304.6,527.6 1317.9,518.6 1317.9,535.1 1307.6,547.1 1304.6,547.1" fill="#5d6266" stroke="#151515" stroke-width="1.2" stroke-linejoin="round" />
<polygon points="1301.2,526.4 1304.6,527.6 1304.6,547.1 1302.2,546.1" fill="#8f969c" stroke="#151515" stroke-width="1.0" stroke-linejoin="round" />
<polygon points="1301.2,522.6 1314.7,516.2 1317.9,517.6 1317.9,518.6 1304.6,525.1 1301.2,524.1" fill="#5d6266" stroke="#151515" stroke-width="1.1" stroke-linejoin="round" />
<polygon points="1301.2,522.6 1304.6,523.9 1304.6,527.6 1301.2,526.4" fill="#a4aaaf" stroke="#151515" stroke-width="0.9" stroke-linejoin="round" />
<polygon points="942.7,543.5 953.5,537.1 990.1,539.2 978.3,546.8" fill="#55595d" stroke="#151515" stroke-width="1" stroke-linejoin="round" />
<polygon points="942.7,543.5 978.3,546.8 978.3,549.2 942.7,545.9" fill="#8f969c" stroke="#151515" stroke-width="0.9" stroke-linejoin="round" />
<polygon points="949.5,522.9 954.0,522.9 954.0,539.4 949.5,539.4" fill="#46494d" stroke="#151515" stroke-width="0.9" stroke-linejoin="round" />
<polygon points="976.5,527.9 981.0,527.9 981.0,543.9 976.5,543.9" fill="#46494d" stroke="#151515" stroke-width="0.9" stroke-linejoin="round" />
<polygon points="988.0,475.6 991.0,477.4 991.0,510.9 988.0,512.9" fill="#5d6266" stroke="#151515" stroke-width="1.1" stroke-linejoin="round" />
<polygon points="956.5,472.9 988.0,475.6 988.0,512.9 956.5,510.9" fill="#8f969c" stroke="#151515" stroke-width="1.4" stroke-linejoin="round" />
<polygon points="948.5,514.9 956.5,510.4 987.5,513.4 978.5,518.9" fill="#5d6266" stroke="#151515" stroke-width="1.1" stroke-linejoin="round" />
<polygon points="948.5,514.9 978.5,518.9 978.5,523.4 948.5,519.4" fill="#8f969c" stroke="#151515" stroke-width="1.1" stroke-linejoin="round" />
<polygon points="945.5,505.9 958.8,496.9 958.8,513.4 948.5,525.4 945.5,525.4" fill="#5d6266" stroke="#151515" stroke-width="1.2" stroke-linejoin="round" />
<polygon points="942.1,504.7 945.5,505.9 945.5,525.4 943.1,524.4" fill="#8f969c" stroke="#151515" stroke-width="1.0" stroke-linejoin="round" />
<polygon points="942.1,500.9 955.6,494.5 958.8,495.9 958.8,496.9 945.5,503.4 942.1,502.4" fill="#5d6266" stroke="#151515" stroke-width="1.1" stroke-linejoin="round" />
<polygon points="942.1,500.9 945.5,502.2 945.5,505.9 942.1,504.7" fill="#a4aaaf" stroke="#151515" stroke-width="0.9" stroke-linejoin="round" />
<polygon points="975.1,511.5 988.4,502.5 988.4,519.0 978.1,531.0 975.1,531.0" fill="#5d6266" stroke="#151515" stroke-width="1.2" stroke-linejoin="round" />
<polygon points="971.7,510.3 975.1,511.5 975.1,531.0 972.7,530.0" fill="#8f969c" stroke="#151515" stroke-width="1.0" stroke-linejoin="round" />
<polygon points="971.7,506.5 985.2,500.1 988.4,501.5 988.4,502.5 975.1,509.0 971.7,508.0" fill="#5d6266" stroke="#151515" stroke-width="1.1" stroke-linejoin="round" />
<polygon points="971.7,506.5 975.1,507.8 975.1,511.5 971.7,510.3" fill="#a4aaaf" stroke="#151515" stroke-width="0.9" stroke-linejoin="round" />
<polygon points="994.2,550.6 1005.0,544.2 1041.6,546.3 1029.8,553.9" fill="#55595d" stroke="#151515" stroke-width="1" stroke-linejoin="round" />
<polygon points="994.2,550.6 1029.8,553.9 1029.8,556.3 994.2,553.0" fill="#8f969c" stroke="#151515" stroke-width="0.9" stroke-linejoin="round" />
<polygon points="1001.0,530.0 1005.5,530.0 1005.5,546.5 1001.0,546.5" fill="#46494d" stroke="#151515" stroke-width="0.9" stroke-linejoin="round" />
<polygon points="1028.0,535.0 1032.5,535.0 1032.5,551.0 1028.0,551.0" fill="#46494d" stroke="#151515" stroke-width="0.9" stroke-linejoin="round" />
<polygon points="1039.5,482.7 1042.5,484.5 1042.5,518.0 1039.5,520.0" fill="#5d6266" stroke="#151515" stroke-width="1.1" stroke-linejoin="round" />
<polygon points="1008.0,480.0 1039.5,482.7 1039.5,520.0 1008.0,518.0" fill="#8f969c" stroke="#151515" stroke-width="1.4" stroke-linejoin="round" />
<polygon points="1000.0,522.0 1008.0,517.5 1039.0,520.5 1030.0,526.0" fill="#5d6266" stroke="#151515" stroke-width="1.1" stroke-linejoin="round" />
<polygon points="1000.0,522.0 1030.0,526.0 1030.0,530.5 1000.0,526.5" fill="#8f969c" stroke="#151515" stroke-width="1.1" stroke-linejoin="round" />
<polygon points="997.0,513.0 1010.3,504.0 1010.3,520.5 1000.0,532.5 997.0,532.5" fill="#5d6266" stroke="#151515" stroke-width="1.2" stroke-linejoin="round" />
<polygon points="993.6,511.8 997.0,513.0 997.0,532.5 994.6,531.5" fill="#8f969c" stroke="#151515" stroke-width="1.0" stroke-linejoin="round" />
<polygon points="993.6,508.0 1007.1,501.6 1010.3,503.0 1010.3,504.0 997.0,510.5 993.6,509.5" fill="#5d6266" stroke="#151515" stroke-width="1.1" stroke-linejoin="round" />
<polygon points="993.6,508.0 997.0,509.3 997.0,513.0 993.6,511.8" fill="#a4aaaf" stroke="#151515" stroke-width="0.9" stroke-linejoin="round" />
<polygon points="1026.6,518.6 1039.9,509.6 1039.9,526.1 1029.6,538.1 1026.6,538.1" fill="#5d6266" stroke="#151515" stroke-width="1.2" stroke-linejoin="round" />
<polygon points="1023.2,517.4 1026.6,518.6 1026.6,538.1 1024.2,537.1" fill="#8f969c" stroke="#151515" stroke-width="1.0" stroke-linejoin="round" />
<polygon points="1023.2,513.6 1036.7,507.2 1039.9,508.6 1039.9,509.6 1026.6,516.1 1023.2,515.1" fill="#5d6266" stroke="#151515" stroke-width="1.1" stroke-linejoin="round" />
<polygon points="1023.2,513.6 1026.6,514.9 1026.6,518.6 1023.2,517.4" fill="#a4aaaf" stroke="#151515" stroke-width="0.9" stroke-linejoin="round" />
<polygon points="1045.7,557.7 1056.5,551.3 1093.1,553.4 1081.3,561.0" fill="#55595d" stroke="#151515" stroke-width="1" stroke-linejoin="round" />
<polygon points="1045.7,557.7 1081.3,561.0 1081.3,563.4 1045.7,560.1" fill="#8f969c" stroke="#151515" stroke-width="0.9" stroke-linejoin="round" />
<polygon points="1052.5,537.1 1057.0,537.1 1057.0,553.6 1052.5,553.6" fill="#46494d" stroke="#151515" stroke-width="0.9" stroke-linejoin="round" />
<polygon points="1079.5,542.1 1084.0,542.1 1084.0,558.1 1079.5,558.1" fill="#46494d" stroke="#151515" stroke-width="0.9" stroke-linejoin="round" />
<polygon points="1091.0,489.8 1094.0,491.6 1094.0,525.1 1091.0,527.1" fill="#5d6266" stroke="#151515" stroke-width="1.1" stroke-linejoin="round" />
<polygon points="1059.5,487.1 1091.0,489.8 1091.0,527.1 1059.5,525.1" fill="#8f969c" stroke="#151515" stroke-width="1.4" stroke-linejoin="round" />
<polygon points="1051.5,529.1 1059.5,524.6 1090.5,527.6 1081.5,533.1" fill="#5d6266" stroke="#151515" stroke-width="1.1" stroke-linejoin="round" />
<polygon points="1051.5,529.1 1081.5,533.1 1081.5,537.6 1051.5,533.6" fill="#8f969c" stroke="#151515" stroke-width="1.1" stroke-linejoin="round" />
<polygon points="1048.5,520.1 1061.8,511.1 1061.8,527.6 1051.5,539.6 1048.5,539.6" fill="#5d6266" stroke="#151515" stroke-width="1.2" stroke-linejoin="round" />
<polygon points="1045.1,518.9 1048.5,520.1 1048.5,539.6 1046.1,538.6" fill="#8f969c" stroke="#151515" stroke-width="1.0" stroke-linejoin="round" />
<polygon points="1045.1,515.1 1058.6,508.7 1061.8,510.1 1061.8,511.1 1048.5,517.6 1045.1,516.6" fill="#5d6266" stroke="#151515" stroke-width="1.1" stroke-linejoin="round" />
<polygon points="1045.1,515.1 1048.5,516.4 1048.5,520.1 1045.1,518.9" fill="#a4aaaf" stroke="#151515" stroke-width="0.9" stroke-linejoin="round" />
<polygon points="1078.1,525.7 1091.4,516.7 1091.4,533.2 1081.1,545.2 1078.1,545.2" fill="#5d6266" stroke="#151515" stroke-width="1.2" stroke-linejoin="round" />
<polygon points="1074.7,524.5 1078.1,525.7 1078.1,545.2 1075.7,544.2" fill="#8f969c" stroke="#151515" stroke-width="1.0" stroke-linejoin="round" />
<polygon points="1074.7,520.7 1088.2,514.3 1091.4,515.7 1091.4,516.7 1078.1,523.2 1074.7,522.2" fill="#5d6266" stroke="#151515" stroke-width="1.1" stroke-linejoin="round" />
<polygon points="1074.7,520.7 1078.1,522.0 1078.1,525.7 1074.7,524.5" fill="#a4aaaf" stroke="#151515" stroke-width="0.9" stroke-linejoin="round" />
<polygon points="1097.2,564.8 1108.0,558.4 1144.6,560.5 1132.8,568.1" fill="#55595d" stroke="#151515" stroke-width="1" stroke-linejoin="round" />
<polygon points="1097.2,564.8 1132.8,568.1 1132.8,570.5 1097.2,567.2" fill="#8f969c" stroke="#151515" stroke-width="0.9" stroke-linejoin="round" />
<polygon points="1104.0,544.2 1108.5,544.2 1108.5,560.7 1104.0,560.7" fill="#46494d" stroke="#151515" stroke-width="0.9" stroke-linejoin="round" />
<polygon points="1131.0,549.2 1135.5,549.2 1135.5,565.2 1131.0,565.2" fill="#46494d" stroke="#151515" stroke-width="0.9" stroke-linejoin="round" />
<polygon points="1142.5,496.9 1145.5,498.7 1145.5,532.2 1142.5,534.2" fill="#5d6266" stroke="#151515" stroke-width="1.1" stroke-linejoin="round" />
<polygon points="1111.0,494.2 1142.5,496.9 1142.5,534.2 1111.0,532.2" fill="#8f969c" stroke="#151515" stroke-width="1.4" stroke-linejoin="round" />
<polygon points="1103.0,536.2 1111.0,531.7 1142.0,534.7 1133.0,540.2" fill="#5d6266" stroke="#151515" stroke-width="1.1" stroke-linejoin="round" />
<polygon points="1103.0,536.2 1133.0,540.2 1133.0,544.7 1103.0,540.7" fill="#8f969c" stroke="#151515" stroke-width="1.1" stroke-linejoin="round" />
<polygon points="1100.0,527.2 1113.3,518.2 1113.3,534.7 1103.0,546.7 1100.0,546.7" fill="#5d6266" stroke="#151515" stroke-width="1.2" stroke-linejoin="round" />
<polygon points="1096.6,526.0 1100.0,527.2 1100.0,546.7 1097.6,545.7" fill="#8f969c" stroke="#151515" stroke-width="1.0" stroke-linejoin="round" />
<polygon points="1096.6,522.2 1110.1,515.8 1113.3,517.2 1113.3,518.2 1100.0,524.7 1096.6,523.7" fill="#5d6266" stroke="#151515" stroke-width="1.1" stroke-linejoin="round" />
<polygon points="1096.6,522.2 1100.0,523.5 1100.0,527.2 1096.6,526.0" fill="#a4aaaf" stroke="#151515" stroke-width="0.9" stroke-linejoin="round" />
<polygon points="1129.6,532.8 1142.9,523.8 1142.9,540.3 1132.6,552.3 1129.6,552.3" fill="#5d6266" stroke="#151515" stroke-width="1.2" stroke-linejoin="round" />
<polygon points="1126.2,531.6 1129.6,532.8 1129.6,552.3 1127.2,551.3" fill="#8f969c" stroke="#151515" stroke-width="1.0" stroke-linejoin="round" />
<polygon points="1126.2,527.8 1139.7,521.4 1142.9,522.8 1142.9,523.8 1129.6,530.3 1126.2,529.3" fill="#5d6266" stroke="#151515" stroke-width="1.1" stroke-linejoin="round" />
<polygon points="1126.2,527.8 1129.6,529.1 1129.6,532.8 1126.2,531.6" fill="#a4aaaf" stroke="#151515" stroke-width="0.9" stroke-linejoin="round" />
<polygon points="1148.7,571.9 1159.5,565.5 1196.1,567.6 1184.3,575.2" fill="#55595d" stroke="#151515" stroke-width="1" stroke-linejoin="round" />
<polygon points="1148.7,571.9 1184.3,575.2 1184.3,577.6 1148.7,574.3" fill="#8f969c" stroke="#151515" stroke-width="0.9" stroke-linejoin="round" />
<polygon points="1155.5,551.3 1160.0,551.3 1160.0,567.8 1155.5,567.8" fill="#46494d" stroke="#151515" stroke-width="0.9" stroke-linejoin="round" />
<polygon points="1182.5,556.3 1187.0,556.3 1187.0,572.3 1182.5,572.3" fill="#46494d" stroke="#151515" stroke-width="0.9" stroke-linejoin="round" />
<polygon points="1194.0,504.0 1197.0,505.8 1197.0,539.3 1194.0,541.3" fill="#5d6266" stroke="#151515" stroke-width="1.1" stroke-linejoin="round" />
<polygon points="1162.5,501.3 1194.0,504.0 1194.0,541.3 1162.5,539.3" fill="#8f969c" stroke="#151515" stroke-width="1.4" stroke-linejoin="round" />
<polygon points="1154.5,543.3 1162.5,538.8 1193.5,541.8 1184.5,547.3" fill="#5d6266" stroke="#151515" stroke-width="1.1" stroke-linejoin="round" />
<polygon points="1154.5,543.3 1184.5,547.3 1184.5,551.8 1154.5,547.8" fill="#8f969c" stroke="#151515" stroke-width="1.1" stroke-linejoin="round" />
<polygon points="1151.5,534.3 1164.8,525.3 1164.8,541.8 1154.5,553.8 1151.5,553.8" fill="#5d6266" stroke="#151515" stroke-width="1.2" stroke-linejoin="round" />
<polygon points="1148.1,533.1 1151.5,534.3 1151.5,553.8 1149.1,552.8" fill="#8f969c" stroke="#151515" stroke-width="1.0" stroke-linejoin="round" />
<polygon points="1148.1,529.3 1161.6,522.9 1164.8,524.3 1164.8,525.3 1151.5,531.8 1148.1,530.8" fill="#5d6266" stroke="#151515" stroke-width="1.1" stroke-linejoin="round" />
<polygon points="1148.1,529.3 1151.5,530.6 1151.5,534.3 1148.1,533.1" fill="#a4aaaf" stroke="#151515" stroke-width="0.9" stroke-linejoin="round" />
<polygon points="1181.1,539.9 1194.4,530.9 1194.4,547.4 1184.1,559.4 1181.1,559.4" fill="#5d6266" stroke="#151515" stroke-width="1.2" stroke-linejoin="round" />
<polygon points="1177.7,538.7 1181.1,539.9 1181.1,559.4 1178.7,558.4" fill="#8f969c" stroke="#151515" stroke-width="1.0" stroke-linejoin="round" />
<polygon points="1177.7,534.9 1191.2,528.5 1194.4,529.9 1194.4,530.9 1181.1,537.4 1177.7,536.4" fill="#5d6266" stroke="#151515" stroke-width="1.1" stroke-linejoin="round" />
<polygon points="1177.7,534.9 1181.1,536.2 1181.1,539.9 1177.7,538.7" fill="#a4aaaf" stroke="#151515" stroke-width="0.9" stroke-linejoin="round" />
<polygon points="1200.2,579.0 1211.0,572.6 1247.6,574.7 1235.8,582.3" fill="#55595d" stroke="#151515" stroke-width="1" stroke-linejoin="round" />
<polygon points="1200.2,579.0 1235.8,582.3 1235.8,584.7 1200.2,581.4" fill="#8f969c" stroke="#151515" stroke-width="0.9" stroke-linejoin="round" />
<polygon points="1207.0,558.4 1211.5,558.4 1211.5,574.9 1207.0,574.9" fill="#46494d" stroke="#151515" stroke-width="0.9" stroke-linejoin="round" />
<polygon points="1234.0,563.4 1238.5,563.4 1238.5,579.4 1234.0,579.4" fill="#46494d" stroke="#151515" stroke-width="0.9" stroke-linejoin="round" />
<polygon points="1245.5,511.1 1248.5,512.9 1248.5,546.4 1245.5,548.4" fill="#5d6266" stroke="#151515" stroke-width="1.1" stroke-linejoin="round" />
<polygon points="1214.0,508.4 1245.5,511.1 1245.5,548.4 1214.0,546.4" fill="#8f969c" stroke="#151515" stroke-width="1.4" stroke-linejoin="round" />
<polygon points="1206.0,550.4 1214.0,545.9 1245.0,548.9 1236.0,554.4" fill="#5d6266" stroke="#151515" stroke-width="1.1" stroke-linejoin="round" />
<polygon points="1206.0,550.4 1236.0,554.4 1236.0,558.9 1206.0,554.9" fill="#8f969c" stroke="#151515" stroke-width="1.1" stroke-linejoin="round" />
<polygon points="1203.0,541.4 1216.3,532.4 1216.3,548.9 1206.0,560.9 1203.0,560.9" fill="#5d6266" stroke="#151515" stroke-width="1.2" stroke-linejoin="round" />
<polygon points="1199.6,540.2 1203.0,541.4 1203.0,560.9 1200.6,559.9" fill="#8f969c" stroke="#151515" stroke-width="1.0" stroke-linejoin="round" />
<polygon points="1199.6,536.4 1213.1,530.0 1216.3,531.4 1216.3,532.4 1203.0,538.9 1199.6,537.9" fill="#5d6266" stroke="#151515" stroke-width="1.1" stroke-linejoin="round" />
<polygon points="1199.6,536.4 1203.0,537.7 1203.0,541.4 1199.6,540.2" fill="#a4aaaf" stroke="#151515" stroke-width="0.9" stroke-linejoin="round" />
<polygon points="1232.6,547.0 1245.9,538.0 1245.9,554.5 1235.6,566.5 1232.6,566.5" fill="#5d6266" stroke="#151515" stroke-width="1.2" stroke-linejoin="round" />
<polygon points="1229.2,545.8 1232.6,547.0 1232.6,566.5 1230.2,565.5" fill="#8f969c" stroke="#151515" stroke-width="1.0" stroke-linejoin="round" />
<polygon points="1229.2,542.0 1242.7,535.6 1245.9,537.0 1245.9,538.0 1232.6,544.5 1229.2,543.5" fill="#5d6266" stroke="#151515" stroke-width="1.1" stroke-linejoin="round" />
<polygon points="1229.2,542.0 1232.6,543.3 1232.6,547.0 1229.2,545.8" fill="#a4aaaf" stroke="#151515" stroke-width="0.9" stroke-linejoin="round" />
<polygon points="1251.7,586.1 1262.5,579.7 1299.1,581.8 1287.3,589.4" fill="#55595d" stroke="#151515" stroke-width="1" stroke-linejoin="round" />
<polygon points="1251.7,586.1 1287.3,589.4 1287.3,591.8 1251.7,588.5" fill="#8f969c" stroke="#151515" stroke-width="0.9" stroke-linejoin="round" />
<polygon points="1258.5,565.5 1263.0,565.5 1263.0,582.0 1258.5,582.0" fill="#46494d" stroke="#151515" stroke-width="0.9" stroke-linejoin="round" />
<polygon points="1285.5,570.5 1290.0,570.5 1290.0,586.5 1285.5,586.5" fill="#46494d" stroke="#151515" stroke-width="0.9" stroke-linejoin="round" />
<polygon points="1297.0,518.2 1300.0,520.0 1300.0,553.5 1297.0,555.5" fill="#5d6266" stroke="#151515" stroke-width="1.1" stroke-linejoin="round" />
<polygon points="1265.5,515.5 1297.0,518.2 1297.0,555.5 1265.5,553.5" fill="#8f969c" stroke="#151515" stroke-width="1.4" stroke-linejoin="round" />
<polygon points="1257.5,557.5 1265.5,553.0 1296.5,556.0 1287.5,561.5" fill="#5d6266" stroke="#151515" stroke-width="1.1" stroke-linejoin="round" />
<polygon points="1257.5,557.5 1287.5,561.5 1287.5,566.0 1257.5,562.0" fill="#8f969c" stroke="#151515" stroke-width="1.1" stroke-linejoin="round" />
<polygon points="1254.5,548.5 1267.8,539.5 1267.8,556.0 1257.5,568.0 1254.5,568.0" fill="#5d6266" stroke="#151515" stroke-width="1.2" stroke-linejoin="round" />
<polygon points="1251.1,547.3 1254.5,548.5 1254.5,568.0 1252.1,567.0" fill="#8f969c" stroke="#151515" stroke-width="1.0" stroke-linejoin="round" />
<polygon points="1251.1,543.5 1264.6,537.1 1267.8,538.5 1267.8,539.5 1254.5,546.0 1251.1,545.0" fill="#5d6266" stroke="#151515" stroke-width="1.1" stroke-linejoin="round" />
<polygon points="1251.1,543.5 1254.5,544.8 1254.5,548.5 1251.1,547.3" fill="#a4aaaf" stroke="#151515" stroke-width="0.9" stroke-linejoin="round" />
<polygon points="1284.1,554.1 1297.4,545.1 1297.4,561.6 1287.1,573.6 1284.1,573.6" fill="#5d6266" stroke="#151515" stroke-width="1.2" stroke-linejoin="round" />
<polygon points="1280.7,552.9 1284.1,554.1 1284.1,573.6 1281.7,572.6" fill="#8f969c" stroke="#151515" stroke-width="1.0" stroke-linejoin="round" />
<polygon points="1280.7,549.1 1294.2,542.7 1297.4,544.1 1297.4,545.1 1284.1,551.6 1280.7,550.6" fill="#5d6266" stroke="#151515" stroke-width="1.1" stroke-linejoin="round" />
<polygon points="1280.7,549.1 1284.1,550.4 1284.1,554.1 1280.7,552.9" fill="#a4aaaf" stroke="#151515" stroke-width="0.9" stroke-linejoin="round" />
<polygon points="922.2,570.0 933.0,563.6 969.6,565.7 957.8,573.3" fill="#55595d" stroke="#151515" stroke-width="1" stroke-linejoin="round" />
<polygon points="922.2,570.0 957.8,573.3 957.8,575.7 922.2,572.4" fill="#8f969c" stroke="#151515" stroke-width="0.9" stroke-linejoin="round" />
<polygon points="929.0,549.4 933.5,549.4 933.5,565.9 929.0,565.9" fill="#46494d" stroke="#151515" stroke-width="0.9" stroke-linejoin="round" />
<polygon points="956.0,554.4 960.5,554.4 960.5,570.4 956.0,570.4" fill="#46494d" stroke="#151515" stroke-width="0.9" stroke-linejoin="round" />
<polygon points="967.5,502.1 970.5,503.9 970.5,537.4 967.5,539.4" fill="#5d6266" stroke="#151515" stroke-width="1.1" stroke-linejoin="round" />
<polygon points="936.0,499.4 967.5,502.1 967.5,539.4 936.0,537.4" fill="#8f969c" stroke="#151515" stroke-width="1.4" stroke-linejoin="round" />
<polygon points="928.0,541.4 936.0,536.9 967.0,539.9 958.0,545.4" fill="#5d6266" stroke="#151515" stroke-width="1.1" stroke-linejoin="round" />
<polygon points="928.0,541.4 958.0,545.4 958.0,549.9 928.0,545.9" fill="#8f969c" stroke="#151515" stroke-width="1.1" stroke-linejoin="round" />
<polygon points="925.0,532.4 938.3,523.4 938.3,539.9 928.0,551.9 925.0,551.9" fill="#5d6266" stroke="#151515" stroke-width="1.2" stroke-linejoin="round" />
<polygon points="921.6,531.2 925.0,532.4 925.0,551.9 922.6,550.9" fill="#8f969c" stroke="#151515" stroke-width="1.0" stroke-linejoin="round" />
<polygon points="921.6,527.4 935.1,521.0 938.3,522.4 938.3,523.4 925.0,529.9 921.6,528.9" fill="#5d6266" stroke="#151515" stroke-width="1.1" stroke-linejoin="round" />
<polygon points="921.6,527.4 925.0,528.7 925.0,532.4 921.6,531.2" fill="#a4aaaf" stroke="#151515" stroke-width="0.9" stroke-linejoin="round" />
<polygon points="954.6,538.0 967.9,529.0 967.9,545.5 957.6,557.5 954.6,557.5" fill="#5d6266" stroke="#151515" stroke-width="1.2" stroke-linejoin="round" />
<polygon points="951.2,536.8 954.6,538.0 954.6,557.5 952.2,556.5" fill="#8f969c" stroke="#151515" stroke-width="1.0" stroke-linejoin="round" />
<polygon points="951.2,533.0 964.7,526.6 967.9,528.0 967.9,529.0 954.6,535.5 951.2,534.5" fill="#5d6266" stroke="#151515" stroke-width="1.1" stroke-linejoin="round" />
<polygon points="951.2,533.0 954.6,534.3 954.6,538.0 951.2,536.8" fill="#a4aaaf" stroke="#151515" stroke-width="0.9" stroke-linejoin="round" />
<polygon points="973.7,577.1 984.5,570.7 1021.1,572.8 1009.3,580.4" fill="#55595d" stroke="#151515" stroke-width="1" stroke-linejoin="round" />
<polygon points="973.7,577.1 1009.3,580.4 1009.3,582.8 973.7,579.5" fill="#8f969c" stroke="#151515" stroke-width="0.9" stroke-linejoin="round" />
<polygon points="980.5,556.5 985.0,556.5 985.0,573.0 980.5,573.0" fill="#46494d" stroke="#151515" stroke-width="0.9" stroke-linejoin="round" />
<polygon points="1007.5,561.5 1012.0,561.5 1012.0,577.5 1007.5,577.5" fill="#46494d" stroke="#151515" stroke-width="0.9" stroke-linejoin="round" />
<polygon points="1019.0,509.2 1022.0,511.0 1022.0,544.5 1019.0,546.5" fill="#5d6266" stroke="#151515" stroke-width="1.1" stroke-linejoin="round" />
<polygon points="987.5,506.5 1019.0,509.2 1019.0,546.5 987.5,544.5" fill="#8f969c" stroke="#151515" stroke-width="1.4" stroke-linejoin="round" />
<polygon points="979.5,548.5 987.5,544.0 1018.5,547.0 1009.5,552.5" fill="#5d6266" stroke="#151515" stroke-width="1.1" stroke-linejoin="round" />
<polygon points="979.5,548.5 1009.5,552.5 1009.5,557.0 979.5,553.0" fill="#8f969c" stroke="#151515" stroke-width="1.1" stroke-linejoin="round" />
<polygon points="976.5,539.5 989.8,530.5 989.8,547.0 979.5,559.0 976.5,559.0" fill="#5d6266" stroke="#151515" stroke-width="1.2" stroke-linejoin="round" />
<polygon points="973.1,538.3 976.5,539.5 976.5,559.0 974.1,558.0" fill="#8f969c" stroke="#151515" stroke-width="1.0" stroke-linejoin="round" />
<polygon points="973.1,534.5 986.6,528.1 989.8,529.5 989.8,530.5 976.5,537.0 973.1,536.0" fill="#5d6266" stroke="#151515" stroke-width="1.1" stroke-linejoin="round" />
<polygon points="973.1,534.5 976.5,535.8 976.5,539.5 973.1,538.3" fill="#a4aaaf" stroke="#151515" stroke-width="0.9" stroke-linejoin="round" />
<polygon points="1006.1,545.1 1019.4,536.1 1019.4,552.6 1009.1,564.6 1006.1,564.6" fill="#5d6266" stroke="#151515" stroke-width="1.2" stroke-linejoin="round" />
<polygon points="1002.7,543.9 1006.1,545.1 1006.1,564.6 1003.7,563.6" fill="#8f969c" stroke="#151515" stroke-width="1.0" stroke-linejoin="round" />
<polygon points="1002.7,540.1 1016.2,533.7 1019.4,535.1 1019.4,536.1 1006.1,542.6 1002.7,541.6" fill="#5d6266" stroke="#151515" stroke-width="1.1" stroke-linejoin="round" />
<polygon points="1002.7,540.1 1006.1,541.4 1006.1,545.1 1002.7,543.9" fill="#a4aaaf" stroke="#151515" stroke-width="0.9" stroke-linejoin="round" />
<polygon points="1025.2,584.2 1036.0,577.8 1072.6,579.9 1060.8,587.5" fill="#55595d" stroke="#151515" stroke-width="1" stroke-linejoin="round" />
<polygon points="1025.2,584.2 1060.8,587.5 1060.8,589.9 1025.2,586.6" fill="#8f969c" stroke="#151515" stroke-width="0.9" stroke-linejoin="round" />
<polygon points="1032.0,563.6 1036.5,563.6 1036.5,580.1 1032.0,580.1" fill="#46494d" stroke="#151515" stroke-width="0.9" stroke-linejoin="round" />
<polygon points="1059.0,568.6 1063.5,568.6 1063.5,584.6 1059.0,584.6" fill="#46494d" stroke="#151515" stroke-width="0.9" stroke-linejoin="round" />
<polygon points="1070.5,516.3 1073.5,518.1 1073.5,551.6 1070.5,553.6" fill="#5d6266" stroke="#151515" stroke-width="1.1" stroke-linejoin="round" />
<polygon points="1039.0,513.6 1070.5,516.3 1070.5,553.6 1039.0,551.6" fill="#8f969c" stroke="#151515" stroke-width="1.4" stroke-linejoin="round" />
<polygon points="1031.0,555.6 1039.0,551.1 1070.0,554.1 1061.0,559.6" fill="#5d6266" stroke="#151515" stroke-width="1.1" stroke-linejoin="round" />
<polygon points="1031.0,555.6 1061.0,559.6 1061.0,564.1 1031.0,560.1" fill="#8f969c" stroke="#151515" stroke-width="1.1" stroke-linejoin="round" />
<polygon points="1028.0,546.6 1041.3,537.6 1041.3,554.1 1031.0,566.1 1028.0,566.1" fill="#5d6266" stroke="#151515" stroke-width="1.2" stroke-linejoin="round" />
<polygon points="1024.6,545.4 1028.0,546.6 1028.0,566.1 1025.6,565.1" fill="#8f969c" stroke="#151515" stroke-width="1.0" stroke-linejoin="round" />
<polygon points="1024.6,541.6 1038.1,535.2 1041.3,536.6 1041.3,537.6 1028.0,544.1 1024.6,543.1" fill="#5d6266" stroke="#151515" stroke-width="1.1" stroke-linejoin="round" />
<polygon points="1024.6,541.6 1028.0,542.9 1028.0,546.6 1024.6,545.4" fill="#a4aaaf" stroke="#151515" stroke-width="0.9" stroke-linejoin="round" />
<polygon points="1057.6,552.2 1070.9,543.2 1070.9,559.7 1060.6,571.7 1057.6,571.7" fill="#5d6266" stroke="#151515" stroke-width="1.2" stroke-linejoin="round" />
<polygon points="1054.2,551.0 1057.6,552.2 1057.6,571.7 1055.2,570.7" fill="#8f969c" stroke="#151515" stroke-width="1.0" stroke-linejoin="round" />
<polygon points="1054.2,547.2 1067.7,540.8 1070.9,542.2 1070.9,543.2 1057.6,549.7 1054.2,548.7" fill="#5d6266" stroke="#151515" stroke-width="1.1" stroke-linejoin="round" />
<polygon points="1054.2,547.2 1057.6,548.5 1057.6,552.2 1054.2,551.0" fill="#a4aaaf" stroke="#151515" stroke-width="0.9" stroke-linejoin="round" />
<polygon points="1076.7,591.3 1087.5,584.9 1124.1,587.0 1112.3,594.6" fill="#55595d" stroke="#151515" stroke-width="1" stroke-linejoin="round" />
<polygon points="1076.7,591.3 1112.3,594.6 1112.3,597.0 1076.7,593.7" fill="#8f969c" stroke="#151515" stroke-width="0.9" stroke-linejoin="round" />
<polygon points="1083.5,570.7 1088.0,570.7 1088.0,587.2 1083.5,587.2" fill="#46494d" stroke="#151515" stroke-width="0.9" stroke-linejoin="round" />
<polygon points="1110.5,575.7 1115.0,575.7 1115.0,591.7 1110.5,591.7" fill="#46494d" stroke="#151515" stroke-width="0.9" stroke-linejoin="round" />
<polygon points="1122.0,523.4 1125.0,525.2 1125.0,558.7 1122.0,560.7" fill="#5d6266" stroke="#151515" stroke-width="1.1" stroke-linejoin="round" />
<polygon points="1090.5,520.7 1122.0,523.4 1122.0,560.7 1090.5,558.7" fill="#8f969c" stroke="#151515" stroke-width="1.4" stroke-linejoin="round" />
<polygon points="1082.5,562.7 1090.5,558.2 1121.5,561.2 1112.5,566.7" fill="#5d6266" stroke="#151515" stroke-width="1.1" stroke-linejoin="round" />
<polygon points="1082.5,562.7 1112.5,566.7 1112.5,571.2 1082.5,567.2" fill="#8f969c" stroke="#151515" stroke-width="1.1" stroke-linejoin="round" />
<polygon points="1079.5,553.7 1092.8,544.7 1092.8,561.2 1082.5,573.2 1079.5,573.2" fill="#5d6266" stroke="#151515" stroke-width="1.2" stroke-linejoin="round" />
<polygon points="1076.1,552.5 1079.5,553.7 1079.5,573.2 1077.1,572.2" fill="#8f969c" stroke="#151515" stroke-width="1.0" stroke-linejoin="round" />
<polygon points="1076.1,548.7 1089.6,542.3 1092.8,543.7 1092.8,544.7 1079.5,551.2 1076.1,550.2" fill="#5d6266" stroke="#151515" stroke-width="1.1" stroke-linejoin="round" />
<polygon points="1076.1,548.7 1079.5,550.0 1079.5,553.7 1076.1,552.5" fill="#a4aaaf" stroke="#151515" stroke-width="0.9" stroke-linejoin="round" />
<polygon points="1109.1,559.3 1122.4,550.3 1122.4,566.8 1112.1,578.8 1109.1,578.8" fill="#5d6266" stroke="#151515" stroke-width="1.2" stroke-linejoin="round" />
<polygon points="1105.7,558.1 1109.1,559.3 1109.1,578.8 1106.7,577.8" fill="#8f969c" stroke="#151515" stroke-width="1.0" stroke-linejoin="round" />
<polygon points="1105.7,554.3 1119.2,547.9 1122.4,549.3 1122.4,550.3 1109.1,556.8 1105.7,555.8" fill="#5d6266" stroke="#151515" stroke-width="1.1" stroke-linejoin="round" />
<polygon points="1105.7,554.3 1109.1,555.6 1109.1,559.3 1105.7,558.1" fill="#a4aaaf" stroke="#151515" stroke-width="0.9" stroke-linejoin="round" />
<polygon points="1128.2,598.4 1139.0,592.0 1175.6,594.1 1163.8,601.7" fill="#55595d" stroke="#151515" stroke-width="1" stroke-linejoin="round" />
<polygon points="1128.2,598.4 1163.8,601.7 1163.8,604.1 1128.2,600.8" fill="#8f969c" stroke="#151515" stroke-width="0.9" stroke-linejoin="round" />
<polygon points="1135.0,577.8 1139.5,577.8 1139.5,594.3 1135.0,594.3" fill="#46494d" stroke="#151515" stroke-width="0.9" stroke-linejoin="round" />
<polygon points="1162.0,582.8 1166.5,582.8 1166.5,598.8 1162.0,598.8" fill="#46494d" stroke="#151515" stroke-width="0.9" stroke-linejoin="round" />
<polygon points="1173.5,530.5 1176.5,532.3 1176.5,565.8 1173.5,567.8" fill="#5d6266" stroke="#151515" stroke-width="1.1" stroke-linejoin="round" />
<polygon points="1142.0,527.8 1173.5,530.5 1173.5,567.8 1142.0,565.8" fill="#8f969c" stroke="#151515" stroke-width="1.4" stroke-linejoin="round" />
<polygon points="1134.0,569.8 1142.0,565.3 1173.0,568.3 1164.0,573.8" fill="#5d6266" stroke="#151515" stroke-width="1.1" stroke-linejoin="round" />
<polygon points="1134.0,569.8 1164.0,573.8 1164.0,578.3 1134.0,574.3" fill="#8f969c" stroke="#151515" stroke-width="1.1" stroke-linejoin="round" />
<polygon points="1131.0,560.8 1144.3,551.8 1144.3,568.3 1134.0,580.3 1131.0,580.3" fill="#5d6266" stroke="#151515" stroke-width="1.2" stroke-linejoin="round" />
<polygon points="1127.6,559.6 1131.0,560.8 1131.0,580.3 1128.6,579.3" fill="#8f969c" stroke="#151515" stroke-width="1.0" stroke-linejoin="round" />
<polygon points="1127.6,555.8 1141.1,549.4 1144.3,550.8 1144.3,551.8 1131.0,558.3 1127.6,557.3" fill="#5d6266" stroke="#151515" stroke-width="1.1" stroke-linejoin="round" />
<polygon points="1127.6,555.8 1131.0,557.1 1131.0,560.8 1127.6,559.6" fill="#a4aaaf" stroke="#151515" stroke-width="0.9" stroke-linejoin="round" />
<polygon points="1160.6,566.4 1173.9,557.4 1173.9,573.9 1163.6,585.9 1160.6,585.9" fill="#5d6266" stroke="#151515" stroke-width="1.2" stroke-linejoin="round" />
<polygon points="1157.2,565.2 1160.6,566.4 1160.6,585.9 1158.2,584.9" fill="#8f969c" stroke="#151515" stroke-width="1.0" stroke-linejoin="round" />
<polygon points="1157.2,561.4 1170.7,555.0 1173.9,556.4 1173.9,557.4 1160.6,563.9 1157.2,562.9" fill="#5d6266" stroke="#151515" stroke-width="1.1" stroke-linejoin="round" />
<polygon points="1157.2,561.4 1160.6,562.7 1160.6,566.4 1157.2,565.2" fill="#a4aaaf" stroke="#151515" stroke-width="0.9" stroke-linejoin="round" />
<polygon points="1179.7,605.5 1190.5,599.1 1227.1,601.2 1215.3,608.8" fill="#55595d" stroke="#151515" stroke-width="1" stroke-linejoin="round" />
<polygon points="1179.7,605.5 1215.3,608.8 1215.3,611.2 1179.7,607.9" fill="#8f969c" stroke="#151515" stroke-width="0.9" stroke-linejoin="round" />
<polygon points="1186.5,584.9 1191.0,584.9 1191.0,601.4 1186.5,601.4" fill="#46494d" stroke="#151515" stroke-width="0.9" stroke-linejoin="round" />
<polygon points="1213.5,589.9 1218.0,589.9 1218.0,605.9 1213.5,605.9" fill="#46494d" stroke="#151515" stroke-width="0.9" stroke-linejoin="round" />
<polygon points="1225.0,537.6 1228.0,539.4 1228.0,572.9 1225.0,574.9" fill="#5d6266" stroke="#151515" stroke-width="1.1" stroke-linejoin="round" />
<polygon points="1193.5,534.9 1225.0,537.6 1225.0,574.9 1193.5,572.9" fill="#8f969c" stroke="#151515" stroke-width="1.4" stroke-linejoin="round" />
<polygon points="1185.5,576.9 1193.5,572.4 1224.5,575.4 1215.5,580.9" fill="#5d6266" stroke="#151515" stroke-width="1.1" stroke-linejoin="round" />
<polygon points="1185.5,576.9 1215.5,580.9 1215.5,585.4 1185.5,581.4" fill="#8f969c" stroke="#151515" stroke-width="1.1" stroke-linejoin="round" />
<polygon points="1182.5,567.9 1195.8,558.9 1195.8,575.4 1185.5,587.4 1182.5,587.4" fill="#5d6266" stroke="#151515" stroke-width="1.2" stroke-linejoin="round" />
<polygon points="1179.1,566.7 1182.5,567.9 1182.5,587.4 1180.1,586.4" fill="#8f969c" stroke="#151515" stroke-width="1.0" stroke-linejoin="round" />
<polygon points="1179.1,562.9 1192.6,556.5 1195.8,557.9 1195.8,558.9 1182.5,565.4 1179.1,564.4" fill="#5d6266" stroke="#151515" stroke-width="1.1" stroke-linejoin="round" />
<polygon points="1179.1,562.9 1182.5,564.2 1182.5,567.9 1179.1,566.7" fill="#a4aaaf" stroke="#151515" stroke-width="0.9" stroke-linejoin="round" />
<polygon points="1212.1,573.5 1225.4,564.5 1225.4,581.0 1215.1,593.0 1212.1,593.0" fill="#5d6266" stroke="#151515" stroke-width="1.2" stroke-linejoin="round" />
<polygon points="1208.7,572.3 1212.1,573.5 1212.1,593.0 1209.7,592.0" fill="#8f969c" stroke="#151515" stroke-width="1.0" stroke-linejoin="round" />
<polygon points="1208.7,568.5 1222.2,562.1 1225.4,563.5 1225.4,564.5 1212.1,571.0 1208.7,570.0" fill="#5d6266" stroke="#151515" stroke-width="1.1" stroke-linejoin="round" />
<polygon points="1208.7,568.5 1212.1,569.8 1212.1,573.5 1208.7,572.3" fill="#a4aaaf" stroke="#151515" stroke-width="0.9" stroke-linejoin="round" />
<polygon points="1231.2,612.6 1242.0,606.2 1278.6,608.3 1266.8,615.9" fill="#55595d" stroke="#151515" stroke-width="1" stroke-linejoin="round" />
<polygon points="1231.2,612.6 1266.8,615.9 1266.8,618.3 1231.2,615.0" fill="#8f969c" stroke="#151515" stroke-width="0.9" stroke-linejoin="round" />
<polygon points="1238.0,592.0 1242.5,592.0 1242.5,608.5 1238.0,608.5" fill="#46494d" stroke="#151515" stroke-width="0.9" stroke-linejoin="round" />
<polygon points="1265.0,597.0 1269.5,597.0 1269.5,613.0 1265.0,613.0" fill="#46494d" stroke="#151515" stroke-width="0.9" stroke-linejoin="round" />
<polygon points="1276.5,544.7 1279.5,546.5 1279.5,580.0 1276.5,582.0" fill="#5d6266" stroke="#151515" stroke-width="1.1" stroke-linejoin="round" />
<polygon points="1245.0,542.0 1276.5,544.7 1276.5,582.0 1245.0,580.0" fill="#8f969c" stroke="#151515" stroke-width="1.4" stroke-linejoin="round" />
<polygon points="1237.0,584.0 1245.0,579.5 1276.0,582.5 1267.0,588.0" fill="#5d6266" stroke="#151515" stroke-width="1.1" stroke-linejoin="round" />
<polygon points="1237.0,584.0 1267.0,588.0 1267.0,592.5 1237.0,588.5" fill="#8f969c" stroke="#151515" stroke-width="1.1" stroke-linejoin="round" />
<polygon points="1234.0,575.0 1247.3,566.0 1247.3,582.5 1237.0,594.5 1234.0,594.5" fill="#5d6266" stroke="#151515" stroke-width="1.2" stroke-linejoin="round" />
<polygon points="1230.6,573.8 1234.0,575.0 1234.0,594.5 1231.6,593.5" fill="#8f969c" stroke="#151515" stroke-width="1.0" stroke-linejoin="round" />
<polygon points="1230.6,570.0 1244.1,563.6 1247.3,565.0 1247.3,566.0 1234.0,572.5 1230.6,571.5" fill="#5d6266" stroke="#151515" stroke-width="1.1" stroke-linejoin="round" />
<polygon points="1230.6,570.0 1234.0,571.3 1234.0,575.0 1230.6,573.8" fill="#a4aaaf" stroke="#151515" stroke-width="0.9" stroke-linejoin="round" />
<polygon points="1263.6,580.6 1276.9,571.6 1276.9,588.1 1266.6,600.1 1263.6,600.1" fill="#5d6266" stroke="#151515" stroke-width="1.2" stroke-linejoin="round" />
<polygon points="1260.2,579.4 1263.6,580.6 1263.6,600.1 1261.2,599.1" fill="#8f969c" stroke="#151515" stroke-width="1.0" stroke-linejoin="round" />
<polygon points="1260.2,575.6 1273.7,569.2 1276.9,570.6 1276.9,571.6 1263.6,578.1 1260.2,577.1" fill="#5d6266" stroke="#151515" stroke-width="1.1" stroke-linejoin="round" />
<polygon points="1260.2,575.6 1263.6,576.9 1263.6,580.6 1260.2,579.4" fill="#a4aaaf" stroke="#151515" stroke-width="0.9" stroke-linejoin="round" />
<polygon points="1039.3,513.4 1071.6,516.8 1071.6,554.4 1042.7,552.0 1042.7,535.7 1039.3,535.3" fill="#2f95c8" stroke="#bfe5f7" stroke-width="1.6" stroke-linejoin="round" />
<polygon points="1054.5,547.0 1068.0,540.6 1071.6,542.0 1071.6,554.4 1057.9,555.9 1057.9,549.9 1054.5,548.9" fill="#4d87a6" stroke="#1d3a48" stroke-width="0.9" stroke-linejoin="round" fill-opacity="0.85" stroke-opacity="0.6"/></g>
<polyline points="677.0,400.0 1232.0,475.0" fill="none" stroke="#151515" stroke-width="2.6" stroke-linejoin="round"/>
<polygon points="752.4,361.6 1041.0,180.2 1061.2,183.4 1050.2,190.4 773.1,364.4" fill="#6c4e71" stroke="#151515" stroke-width="1.4" stroke-linejoin="round" />
<polygon points="773.1,364.4 1050.2,190.4 1050.2,217.9 773.1,390.6" fill="#6e5073" stroke="#151515" stroke-width="1.4" stroke-linejoin="round" />
<path d="M1050.2,190.4 L1061.2,183.4 1137.6,193.5 1128.9,200.2 z" fill="#6c4e71" stroke="#151515" stroke-width="1.4" stroke-linejoin="round"/>
<path d="M1128.9,200.2 L1137.6,193.5 Q1162.5,200.2 1164.9,221.3 L1164.9,246.2 1153.4,252.5 1153.4,223.2 Q1149.1,205.9 1128.9,200.2 z" fill="#6e5073" stroke="#151515" stroke-width="1.4" stroke-linejoin="round"/>
<path d="M1050.2,190.4 L1128.9,200.2 Q1149.1,205.9 1153.4,223.2 L1153.4,252.5 1127.5,249.6 1127.5,235.7 Q1126.1,226.6 1118.4,225.6 L1049.8,217.0 z" fill="#b27fbb" stroke="#151515" stroke-width="1.4" stroke-linejoin="round"/>
<polyline points="1153.4,230.4 1164.9,224.1" fill="none" stroke="#151515" stroke-width="1.1" stroke-linejoin="round"/>
<path d="M968.6,242.3 L979.6,235.3 1056.0,245.4 1047.3,252.1 z" fill="#6c4e71" stroke="#151515" stroke-width="1.4" stroke-linejoin="round"/>
<path d="M1047.3,252.1 L1056.0,245.4 Q1080.9,252.1 1083.3,273.2 L1083.3,298.1 1071.8,304.4 1071.8,275.1 Q1067.5,257.8 1047.3,252.1 z" fill="#6e5073" stroke="#151515" stroke-width="1.4" stroke-linejoin="round"/>
<path d="M968.6,242.3 L1047.3,252.1 Q1067.5,257.8 1071.8,275.1 L1071.8,304.4 1045.9,301.5 1045.9,287.6 Q1044.5,278.5 1036.8,277.5 L968.2,268.9 z" fill="#b27fbb" stroke="#151515" stroke-width="1.4" stroke-linejoin="round"/>
<polyline points="1071.8,282.3 1083.3,276.0" fill="none" stroke="#151515" stroke-width="1.1" stroke-linejoin="round"/>
<path d="M887.1,293.3 L898.1,286.3 974.5,296.4 965.8,303.1 z" fill="#6c4e71" stroke="#151515" stroke-width="1.4" stroke-linejoin="round"/>
<path d="M965.8,303.1 L974.5,296.4 Q999.4,303.1 1001.8,324.2 L1001.8,349.1 990.3,355.4 990.3,326.1 Q986.0,308.8 965.8,303.1 z" fill="#6e5073" stroke="#151515" stroke-width="1.4" stroke-linejoin="round"/>
<path d="M887.1,293.3 L965.8,303.1 Q986.0,308.8 990.3,326.1 L990.3,355.4 964.4,352.5 964.4,338.6 Q963.0,329.5 955.3,328.5 L886.7,319.9 z" fill="#b27fbb" stroke="#151515" stroke-width="1.4" stroke-linejoin="round"/>
<polyline points="990.3,333.3 1001.8,327.0" fill="none" stroke="#151515" stroke-width="1.1" stroke-linejoin="round"/>
<polygon points="752.4,361.6 773.1,364.4 773.1,390.6 752.4,387.8" fill="#b27fbb" stroke="#151515" stroke-width="1.4" stroke-linejoin="round" />
<polygon points="814.5,392.4 820.0,387.2 889.1,376.3 895.8,377.4 895.8,386.8 879.1,382.8" fill="#577f44" stroke="#151515" stroke-width="1.4" stroke-linejoin="round" />
<polygon points="1017.2,400.1 1022.8,395.7 1070.7,401.9 1135.3,430.2 1126.4,434.7 1062.9,407.3" fill="#577f44" stroke="#151515" stroke-width="1.4" stroke-linejoin="round" />
<polygon points="814.5,392.4 879.1,382.8 1062.9,407.3 1126.4,434.7 1126.4,450.3 814.5,407.9" fill="#78ab5f" stroke="#151515" stroke-width="1.4" stroke-linejoin="round" />
<polygon points="1126.4,434.7 1135.3,430.2 1135.3,444.7 1126.4,450.3" fill="#577f44" stroke="#151515" stroke-width="1.4" stroke-linejoin="round" />
<polygon points="895.8,369.0 921.4,353.8 1013.9,366.3 988.2,380.1" fill="#577f44" stroke="#151515" stroke-width="1.4" stroke-linejoin="round" />
<polygon points="988.2,380.1 1013.9,366.3 1018.5,368.5 1022.0,374.0 1024.5,381.0 1025.0,388.0 1025.0,396.8 1017.2,400.1 1015.6,394.6 1012.7,390.8 1008.3,389.0 1002.7,390.1 998.3,393.5 994.9,399.5 987.1,402.4" fill="#577f44" stroke="#151515" stroke-width="1.4" stroke-linejoin="round" />
<polygon points="994.9,399.5 998.3,393.5 1002.7,390.1 1008.3,389.0 1012.7,390.8 1015.6,394.6 1017.2,400.1" fill="#78ab5f" stroke="#151515" stroke-width="1.0" stroke-linejoin="round" />
<polygon points="895.8,369.0 988.2,380.1 987.1,402.4 895.8,391.2" fill="#78ab5f" stroke="#151515" stroke-width="1.4" stroke-linejoin="round" />
<path d="M1326.5,229.1 Q1329.0,223.2 1345.7,221.4 L1446.6,235.1 1414.8,239.6 z" fill="#76647b" stroke="#151515" stroke-width="1.4" stroke-linejoin="round"/>
<path d="M1326.5,229.1 Q1329.0,223.2 1345.7,221.4 L1338.0,229.2 z" fill="#76647b" stroke="#151515" stroke-width="1.0" stroke-linejoin="round"/>
<path d="M1335.6,264.6 Q1336.6,257.9 1347.6,258.8 L1347.6,271.3 1335.6,278.0 z" fill="#877585" stroke="#151515" stroke-width="1.4" stroke-linejoin="round"/>
<path d="M1310.0,274.2 L1309.7,250.2 Q1312.1,232.0 1326.5,229.1 L1414.8,239.6 1375.5,261.6 1344.8,257.4 Q1336.6,257.9 1335.6,264.6 L1335.6,278.0 z" fill="#c8b1cb" stroke="#151515" stroke-width="1.4" stroke-linejoin="round"/>
<path d="M1244.7,281.0 Q1247.2,275.1 1263.9,273.3 L1364.8,287.0 1333.0,291.5 z" fill="#76647b" stroke="#151515" stroke-width="1.4" stroke-linejoin="round"/>
<path d="M1244.7,281.0 Q1247.2,275.1 1263.9,273.3 L1256.2,281.1 z" fill="#76647b" stroke="#151515" stroke-width="1.0" stroke-linejoin="round"/>
<path d="M1253.8,316.5 Q1254.8,309.8 1265.8,310.7 L1265.8,323.2 1253.8,329.9 z" fill="#877585" stroke="#151515" stroke-width="1.4" stroke-linejoin="round"/>
<path d="M1228.2,326.1 L1227.9,302.1 Q1230.3,283.9 1244.7,281.0 L1333.0,291.5 1293.7,313.5 1263.0,309.3 Q1254.8,309.8 1253.8,316.5 L1253.8,329.9 z" fill="#c8b1cb" stroke="#151515" stroke-width="1.4" stroke-linejoin="round"/>
<path d="M1163.0,332.1 Q1165.5,326.2 1182.2,324.4 L1283.1,338.1 1251.3,342.6 z" fill="#76647b" stroke="#151515" stroke-width="1.4" stroke-linejoin="round"/>
<path d="M1163.0,332.1 Q1165.5,326.2 1182.2,324.4 L1174.5,332.2 z" fill="#76647b" stroke="#151515" stroke-width="1.0" stroke-linejoin="round"/>
<path d="M1172.1,367.6 Q1173.1,360.9 1184.1,361.8 L1184.1,374.3 1172.1,381.0 z" fill="#877585" stroke="#151515" stroke-width="1.4" stroke-linejoin="round"/>
<path d="M1146.5,377.2 L1146.2,353.2 Q1148.6,335.0 1163.0,332.1 L1251.3,342.6 1212.0,364.6 1181.3,360.4 Q1173.1,360.9 1172.1,367.6 L1172.1,381.0 z" fill="#c8b1cb" stroke="#151515" stroke-width="1.4" stroke-linejoin="round"/>
<polygon points="1137.7,414.4 1157.6,416.6 1446.6,235.1 1414.6,240.2" fill="#76647b" stroke="#151515" stroke-width="1.4" stroke-linejoin="round" />
<polygon points="1157.6,416.6 1446.6,235.1 1446.6,262.8 1157.6,442.8" fill="#877585" stroke="#151515" stroke-width="1.4" stroke-linejoin="round" />
<polygon points="1137.7,414.4 1157.6,416.6 1157.6,442.8 1137.7,440.6" fill="#c8b1cb" stroke="#151515" stroke-width="1.4" stroke-linejoin="round" /></svg>
<div id="tb"><div id="tbl"></div>
  <div class="abs" style="left:7px;top:7px;width:91px;height:59px;background:#deeef6;border-radius:5px"></div>
<svg class="abs" style="left:0;top:0" width="1571" height="72" viewBox="0 0 1571 72"><polygon points="44.8,14.7 56.4,21.0 56.4,34.2 44.8,40.5 33.2,34.2 33.2,21.0" fill="#f4f4f4" stroke="#c4c4c4" stroke-width="1.6"/><polygon points="44.8,18.6 52.4,22.9 44.8,27.2 37.2,22.9" fill="#c6e3f5" stroke="#1b84c0" stroke-width="1.2" stroke-linejoin="round"/><polygon points="37.2,22.9 44.8,27.2 44.8,35.8 37.2,31.5" fill="#a2d1ee" stroke="#1b84c0" stroke-width="1.2" stroke-linejoin="round"/><polygon points="44.8,27.2 52.4,22.9 52.4,31.5 44.8,35.8" fill="#7fbde6" stroke="#1b84c0" stroke-width="1.2" stroke-linejoin="round"/><path d="M77.6,34.5L82,39L86.4,34.5" fill="none" stroke="#5a5a5a" stroke-width="1.2"/><path d="M130.5,19.5 v6.5 a7.6,3.3 0 0 0 15.2,0 v-6.5" fill="#7fbde6" stroke="#1b84c0" stroke-width="1.2"/><ellipse cx="138.1" cy="19.5" rx="7.6" ry="3.3" fill="#c6e3f5" stroke="#1b84c0" stroke-width="1.2"/><polygon points="129.9,22.8 137.7,27.0 129.9,31.2 122.1,27.0" fill="#c6e3f5" stroke="#1b84c0" stroke-width="1.2" stroke-linejoin="round"/><polygon points="122.1,27.0 129.9,31.2 129.9,39.6 122.1,35.4" fill="#a2d1ee" stroke="#1b84c0" stroke-width="1.2" stroke-linejoin="round"/><polygon points="129.9,31.2 137.7,27.0 137.7,35.4 129.9,39.6" fill="#7fbde6" stroke="#1b84c0" stroke-width="1.2" stroke-linejoin="round"/><path d="M158.2,34.5L162.6,39L167,34.5" fill="none" stroke="#5a5a5a" stroke-width="1.2"/><polygon points="274.1,17.9 282.9,22.8 274.1,27.7 265.3,22.8" fill="#f2f2f2" stroke="#b9b9b9" stroke-width="1.1" stroke-linejoin="round"/><polygon points="265.3,22.8 274.1,27.7 274.1,37.5 265.3,32.6" fill="#e8e8e8" stroke="#b9b9b9" stroke-width="1.1" stroke-linejoin="round"/><polygon points="274.1,27.7 282.9,22.8 282.9,32.6 274.1,37.5" fill="#dcdcdc" stroke="#b9b9b9" stroke-width="1.1" stroke-linejoin="round"/><polygon points="274.1,27.7 282.9,22.8 282.9,32.6 274.1,37.5" fill="#7fbde6" stroke="#1b84c0" stroke-width="1.2"/><circle cx="282.7" cy="35.3" r="6.3" fill="#fff"/><circle cx="282.7" cy="35.3" r="5.3" fill="#1b84c0"/><path d="M280.4,33.0L285.0,37.599999999999994M285.0,33.0L280.4,37.599999999999994" stroke="#fff" stroke-width="1.4"/><polygon points="327.6,17.9 336.4,22.8 327.6,27.7 318.8,22.8" fill="#f2f2f2" stroke="#b9b9b9" stroke-width="1.1" stroke-linejoin="round"/><polygon points="318.8,22.8 327.6,27.7 327.6,37.5 318.8,32.6" fill="#e8e8e8" stroke="#b9b9b9" stroke-width="1.1" stroke-linejoin="round"/><polygon points="327.6,27.7 336.4,22.8 336.4,32.6 327.6,37.5" fill="#dcdcdc" stroke="#b9b9b9" stroke-width="1.1" stroke-linejoin="round"/><polygon points="327.6,27.7 336.4,22.8 336.4,32.6 327.6,37.5" fill="#7fbde6" stroke="#1b84c0" stroke-width="1.2"/><path d="M329,28 L339,35" stroke="#1b84c0" stroke-width="1.5"/><polygon points="340.5,36 335,35 338.5,31.5" fill="#1b84c0"/><polygon points="382.5,16.9 391.3,21.8 382.5,26.7 373.7,21.8" fill="#f2f2f2" stroke="#b9b9b9" stroke-width="1.1" stroke-linejoin="round"/><polygon points="373.7,21.8 382.5,26.7 382.5,36.5 373.7,31.6" fill="#e8e8e8" stroke="#b9b9b9" stroke-width="1.1" stroke-linejoin="round"/><polygon points="382.5,26.7 391.3,21.8 391.3,31.6 382.5,36.5" fill="#dcdcdc" stroke="#b9b9b9" stroke-width="1.1" stroke-linejoin="round"/><polygon points="389.3,22.2 396.5,26.5 389.3,30.8 382.1,26.5" fill="#c6e3f5" stroke="#1b84c0" stroke-width="1.2" stroke-linejoin="round"/><polygon points="382.1,26.5 389.3,30.8 389.3,39.4 382.1,35.1" fill="#a2d1ee" stroke="#1b84c0" stroke-width="1.2" stroke-linejoin="round"/><polygon points="389.3,30.8 396.5,26.5 396.5,35.1 389.3,39.4" fill="#7fbde6" stroke="#1b84c0" stroke-width="1.2" stroke-linejoin="round"/><polygon points="510.0,17.4 518.8,22.3 510.0,27.2 501.2,22.3" fill="#c6e3f5" stroke="#1b84c0" stroke-width="1.2" stroke-linejoin="round"/><polygon points="501.2,22.3 510.0,27.2 510.0,37.0 501.2,32.1" fill="#a2d1ee" stroke="#1b84c0" stroke-width="1.2" stroke-linejoin="round"/><polygon points="510.0,27.2 518.8,22.3 518.8,32.1 510.0,37.0" fill="#7fbde6" stroke="#1b84c0" stroke-width="1.2" stroke-linejoin="round"/><circle cx="518.6" cy="34.8" r="6.3" fill="#fff"/><circle cx="518.6" cy="34.8" r="5.3" fill="#1b84c0"/><path d="M516.3000000000001,32.5L520.9,37.099999999999994M520.9,32.5L516.3000000000001,37.099999999999994" stroke="#fff" stroke-width="1.4"/><polygon points="573.0,16.7 581.5,21.4 573.0,26.2 564.5,21.4" fill="#f2f2f2" stroke="#b9b9b9" stroke-width="1.1" stroke-linejoin="round"/><polygon points="564.5,21.4 573.0,26.2 573.0,35.7 564.5,30.9" fill="#e8e8e8" stroke="#b9b9b9" stroke-width="1.1" stroke-linejoin="round"/><polygon points="573.0,26.2 581.5,21.4 581.5,30.9 573.0,35.7" fill="#dcdcdc" stroke="#b9b9b9" stroke-width="1.1" stroke-linejoin="round"/><path d="M578.5,29.5 L586.5,25 q1,4 0,9 L580,38 q1,-4 -1.5,-8.5z" fill="#7fbde6" stroke="#1b84c0" stroke-width="1.2"/><polygon points="645.6,16.5 653.6,20.5 645.6,24.5 637.6,20.5" fill="#c6e3f5" stroke="#1b84c0" stroke-width="1.2"/><polygon points="636.5,23.0 644.0,27.0 644.0,37.5 636.5,33.5" fill="#a2d1ee" stroke="#1b84c0" stroke-width="1.2"/><polygon points="647.2,27.0 654.7,23.0 654.7,33.5 647.2,37.5" fill="#7fbde6" stroke="#1b84c0" stroke-width="1.2"/><polygon points="696.0,21.0 710.0,15.5 710.0,31.0 696.0,37.5" fill="#7fbde6" stroke="#1b84c0" stroke-width="1.3"/><polygon points="699.0,23.0 707.0,19.5 707.0,29.0 699.0,33.0" fill="#a2d1ee" stroke="#1b84c0" stroke-width="0.8"/><polygon points="712.5,26.5 718.8,30.0 712.5,33.5 706.2,30.0" fill="#f2f2f2" stroke="#b9b9b9" stroke-width="1.1" stroke-linejoin="round"/><polygon points="706.2,30.0 712.5,33.5 712.5,40.5 706.2,37.0" fill="#e8e8e8" stroke="#b9b9b9" stroke-width="1.1" stroke-linejoin="round"/><polygon points="712.5,33.5 718.8,30.0 718.8,37.0 712.5,40.5" fill="#dcdcdc" stroke="#b9b9b9" stroke-width="1.1" stroke-linejoin="round"/><polygon points="763.0,15.0 773.5,21.0 773.5,33.5 763.0,39.5 752.5,33.5 752.5,21.0" fill="none" stroke="#a9d4ee" stroke-width="0.9" stroke-dasharray="1.5,1"/><polygon points="763.0,19.9 769.5,23.6 763.0,27.2 756.5,23.6" fill="#c6e3f5" stroke="#1b84c0" stroke-width="1.2" stroke-linejoin="round"/><polygon points="756.5,23.6 763.0,27.2 763.0,34.5 756.5,30.8" fill="#a2d1ee" stroke="#1b84c0" stroke-width="1.2" stroke-linejoin="round"/><polygon points="763.0,27.2 769.5,23.6 769.5,30.8 763.0,34.5" fill="#7fbde6" stroke="#1b84c0" stroke-width="1.2" stroke-linejoin="round"/><polygon points="808.0,22.0 818.0,17.0 818.0,33.0 808.0,38.0" fill="#ddd" stroke="#bbb" stroke-width="1"/><polygon points="810.0,24.0 825.0,17.0 825.0,32.0 810.0,39.0" fill="#7fbde6" stroke="#1b84c0" stroke-width="1.2"/><polygon points="819.0,22.5 825.0,26.0 819.0,29.5 813.0,26.0" fill="#c6e3f5" stroke="#1b84c0" stroke-width="1.2" stroke-linejoin="round"/><polygon points="813.0,26.0 819.0,29.5 819.0,36.5 813.0,33.0" fill="#a2d1ee" stroke="#1b84c0" stroke-width="1.2" stroke-linejoin="round"/><polygon points="819.0,29.5 825.0,26.0 825.0,33.0 819.0,36.5" fill="#7fbde6" stroke="#1b84c0" stroke-width="1.2" stroke-linejoin="round"/><polygon points="875.6,16.5 887.5,22.0 887.5,34.0 875.6,39.5 863.7,34.0 863.7,22.0" fill="#7fbde6" stroke="#1b84c0" stroke-width="1.2"/><polygon points="875.6,16.5 887.5,22.0 875.6,27.5 863.7,22.0" fill="#c6e3f5" stroke="#1b84c0" stroke-width="1.2"/><polygon points="875.6,19.5 881.0,22.0 875.6,24.5 870.2,22.0" fill="#a2d1ee" stroke="#1b84c0" stroke-width="1"/><path d="M873,27v12M878,27v12" stroke="#1b84c0" stroke-width="1"/><path d="M899.6,34L904,38.5L908.4,34" fill="none" stroke="#5a5a5a" stroke-width="1.2"/><polygon points="956.0,22.5 961.8,25.8 956.0,29.0 950.2,25.8" fill="#c6e3f5" stroke="#1b84c0" stroke-width="1.2" stroke-linejoin="round"/><polygon points="950.2,25.8 956.0,29.0 956.0,35.5 950.2,32.2" fill="#a2d1ee" stroke="#1b84c0" stroke-width="1.2" stroke-linejoin="round"/><polygon points="956.0,29.0 961.8,25.8 961.8,32.2 956.0,35.5" fill="#7fbde6" stroke="#1b84c0" stroke-width="1.2" stroke-linejoin="round"/><path d="M956,21.5v-4.5M953.5,19.5L956,17L958.5,19.5M949,35l-3,2M963,35l3,2" stroke="#1b84c0" stroke-width="1.1" fill="none"/><path d="M982.2,34L986.6,38.5L991,34" fill="none" stroke="#5a5a5a" stroke-width="1.2"/><polygon points="1033.4,16.5 1043.4,22.1 1033.4,27.8 1023.4,22.1" fill="#e3f1fa" stroke="#1b84c0" stroke-width="1.5" stroke-linejoin="round"/><polygon points="1023.4,22.1 1033.4,27.8 1033.4,39.1 1023.4,33.5" fill="#cfe7f6" stroke="#1b84c0" stroke-width="1.5" stroke-linejoin="round"/><polygon points="1033.4,27.8 1043.4,22.1 1043.4,33.5 1033.4,39.1" fill="#b9dcf2" stroke="#1b84c0" stroke-width="1.5" stroke-linejoin="round"/><polygon points="1088.4,17.8 1097.4,22.8 1088.4,27.8 1079.4,22.8" fill="#c6e3f5" stroke="#1b84c0" stroke-width="1.4" stroke-linejoin="round"/><polygon points="1079.4,22.8 1088.4,27.8 1088.4,37.8 1079.4,32.8" fill="#a2d1ee" stroke="#1b84c0" stroke-width="1.4" stroke-linejoin="round"/><polygon points="1088.4,27.8 1097.4,22.8 1097.4,32.8 1088.4,37.8" fill="#7fbde6" stroke="#1b84c0" stroke-width="1.4" stroke-linejoin="round"/><path d="M1082,26l5,8M1094,26l-5,8" stroke="#1b84c0" stroke-width="0.8"/><rect x="1240.6" y="18.4" width="16.2" height="13" fill="none" stroke="#1b84c0" stroke-width="1.5"/><rect x="1237.3" y="22" width="15.2" height="15.7" fill="#fff" stroke="#1b84c0" stroke-width="1.5"/><polygon points="1329.5,24.5 1339.5,28.2 1329.5,32.0 1319.5,28.2" fill="#f2f2f2" stroke="#b9b9b9" stroke-width="1.1" stroke-linejoin="round"/><polygon points="1319.5,28.2 1329.5,32.0 1329.5,39.5 1319.5,35.8" fill="#e8e8e8" stroke="#b9b9b9" stroke-width="1.1" stroke-linejoin="round"/><polygon points="1329.5,32.0 1339.5,28.2 1339.5,35.8 1329.5,39.5" fill="#dcdcdc" stroke="#b9b9b9" stroke-width="1.1" stroke-linejoin="round"/><polygon points="1323.9,15.0 1330.1,18.5 1323.9,22.0 1317.7,18.5" fill="#c6e3f5" stroke="#1b84c0" stroke-width="1.2" stroke-linejoin="round"/><polygon points="1317.7,18.5 1323.9,22.0 1323.9,29.0 1317.7,25.5" fill="#a2d1ee" stroke="#1b84c0" stroke-width="1.2" stroke-linejoin="round"/><polygon points="1323.9,22.0 1330.1,18.5 1330.1,25.5 1323.9,29.0" fill="#7fbde6" stroke="#1b84c0" stroke-width="1.2" stroke-linejoin="round"/><rect x="1455" y="20" width="15" height="15.5" fill="#c6e3f5"/><path d="M1455,19.5v16.5M1470,19.5v16.5" stroke="#1b84c0" stroke-width="1.6"/><path d="M1458,27.7h9M1459.5,25.8l-2,1.9l2,1.9M1465.5,25.8l2,1.9l-2,1.9" stroke="#1b84c0" stroke-width="0.9" fill="none"/><rect x="1529.5" y="18.4" width="12.4" height="11.2" fill="none" stroke="#1b84c0" stroke-width="1.5"/><rect x="1523" y="22" width="15.2" height="15.7" fill="none" stroke="#1b84c0" stroke-width="1.5"/><rect x="1530" y="22.8" width="7.5" height="6.2" fill="#a9d3ee"/></svg>
  <div class="lbl" style="left:44px">Internal</div>
  <div class="lbl" style="left:133px">Primitives</div>
  <div class="sep" style="left:190px"></div>
  <div class="sec" style="left:224.5px">FACE</div>
  <div class="lbl" style="left:275px">Delete</div>
  <div class="lbl" style="left:329.8px">Move</div>
  <div class="lbl" style="left:385.6px">Extrude</div>
  <div class="sep" style="left:421px"></div>
  <div class="sec" style="left:459px">BODY</div>
  <div class="lbl" style="left:511px">Delete</div>
  <div class="lbl" style="left:575.5px;letter-spacing:-0.3px;word-spacing:-2px">Close sheet</div>
  <div class="lbl" style="left:646px;letter-spacing:-0.2px;word-spacing:-1px">Facet split</div>
  <div class="lbl" style="left:707.7px">Imprint</div>
  <div class="lbl" style="left:762px">Scale</div>
  <div class="lbl" style="left:817.4px">Split</div>
  <div class="lbl" style="left:876px">Boolean</div>
  <div class="lbl" style="left:956px;letter-spacing:-0.2px">Transform</div>
  <div class="lbl" style="left:1033px">Simplify</div>
  <div class="lbl" style="left:1089.4px">Wrap</div>
  <div class="sep" style="left:1125px"></div>
  <div class="sec" style="left:1167px">MODEL</div>
  <div class="lbl" style="left:1246.7px;letter-spacing:-0.15px;word-spacing:-2px">Fix interferences</div>
  <div class="lbl" style="left:1328px">Add CAD</div>
  <div class="sep" style="left:1368px"></div>
  <div class="sec" style="left:1407.5px">TOOLS</div>
  <div class="lbl" style="left:1462px">Gaps</div>
  <div class="lbl" style="left:1531.7px">Interferences</div>
</div>

<div id="lp"></div><div id="gut"></div><div id="lpc">
  <div class="card" style="top:11px;height:91px">
    <div class="abs" style="left:0;top:45px;width:253px;height:1px;background:#e6e6e6"></div>
    <div class="abs" style="left:17px;top:14px;font-size:15px;font-weight:bold;color:#3a3a3a;white-space:nowrap">GEOMETRIES (2)</div>
    <div class="plus" style="left:219px;top:13px"><svg width="19" height="19" viewBox="0 0 19 19" style="position:absolute;left:-1px;top:-1px"><circle cx="9.5" cy="9.5" r="9" fill="#fff" stroke="#dedede" stroke-width="1"/><path d="M6,9.5h7M9.5,6v7" stroke="#4a4550" stroke-width="1.8"/></svg></div>
    <div class="abs" style="left:1px;top:59px;font-size:15px;letter-spacing:0.5px;font-weight:bold;color:#3a3a3a;white-space:nowrap">MULATIONS (0)</div>
    <div class="plus" style="left:219px;top:58px"><svg width="19" height="19" viewBox="0 0 19 19" style="position:absolute;left:-1px;top:-1px"><circle cx="9.5" cy="9.5" r="9" fill="#fff" stroke="#dedede" stroke-width="1"/><path d="M6,9.5h7M9.5,6v7" stroke="#4a4550" stroke-width="1.8"/></svg></div>
  </div>
  <div class="card" style="top:108px;height:43px">
    <div class="abs" style="left:-8px;top:12px;font-size:18px;font-weight:bold;color:#333;white-space:nowrap">status</div>
  </div>
</div>

<div id="dlg">
  <div class="abs" style="left:14px;top:18px;font-size:18px;font-weight:bold;color:#333;white-space:nowrap">Internal flow volume</div>
  <div class="abs" style="left:385px;top:6px;width:40px;height:40px;border:1px solid #e0e0e0;border-radius:4px"></div>
  <div class="abs" style="left:0;top:54px;width:434px;height:1px;background:#e6e6e6"></div>
  <div class="flabel" style="top:77px">Seed face</div>
  <div class="clr" style="top:77px">Clear list</div>
  <div class="inp" style="top:105px;height:42px;border:2px solid #2fb0e4;background:#e7f6fc"><div class="ph" style="left:10px;top:11px;font-size:15.5px;font-style:normal;color:#333">face 14246@Seats</div></div>
  <div class="flabel" style="top:164px">Boundary faces (optional)</div>
  <div class="clr" style="top:164px">Clear list</div>
  <div class="inp" style="top:193px"><div class="ph">Pick Faces</div></div>
  <div class="flabel" style="top:251px">Excluded parts (optional)</div>
  <div class="clr" style="top:251px">Clear list</div>
  <div class="inp" style="top:280px"><div class="ph">Pick Volumes</div></div>
  <div class="abs" style="left:0;top:332px;width:434px;height:1px;background:#e6e6e6"></div>
  <div class="abs" style="left:11px;top:342px;width:40px;height:40px;border:1px solid #e0e2e2;border-radius:5px"></div>
  <div class="abs" style="left:312px;top:342px;width:110px;height:40px;background:#0177ab;border-radius:4px;color:#fff;font-weight:bold;font-size:15px;text-align:center;line-height:41px">Apply</div>
</div>

<div class="abs" style="left:1551px;top:84px;width:20px;height:311px;background:#fff;border:1px solid #e3e3e3;border-right:none;box-shadow:0 1px 3px rgba(0,0,0,.08);overflow:hidden"><div class="abs" style="left:0;top:264px;width:20px;height:1px;background:#e6e6e6"></div><div class="abs" style="left:15px;top:280px;font-size:15px;color:#333">S</div></div>

<svg class="abs" style="left:0;top:0;pointer-events:none" width="1571" height="834" viewBox="0 0 1571 834"><path d="M885.9,93v40" stroke="#ececec" stroke-width="1"/><path d="M940.5,93v40" stroke="#ececec" stroke-width="1"/><path d="M1212.5,93v40" stroke="#ececec" stroke-width="1"/><path d="M1262.4,93v40" stroke="#ececec" stroke-width="1"/><path d="M1317.4,93v40" stroke="#ececec" stroke-width="1"/><rect x="995.6" y="88.6" width="47.5" height="47.5" rx="5" fill="#fafafa" stroke="#c5e3f2" stroke-width="1"/><rect x="1158.9" y="88.6" width="47.5" height="47.5" rx="5" fill="#fafafa" stroke="#c5e3f2" stroke-width="1"/><polygon points="910.5,102.1 919.2,107.0 910.5,111.9 901.8,107.0" fill="#ebebeb" stroke="#4e4e52" stroke-width="1.1" stroke-linejoin="round"/><polygon points="901.8,107.0 910.5,111.9 910.5,121.7 901.8,116.8" fill="#85858c" stroke="#4e4e52" stroke-width="1.1" stroke-linejoin="round"/><polygon points="910.5,111.9 919.2,107.0 919.2,116.8 910.5,121.7" fill="#c6c6ca" stroke="#4e4e52" stroke-width="1.1" stroke-linejoin="round"/><path d="M923.5,128h3.5v-3.5" fill="none" stroke="#999" stroke-width="1"/><polygon points="965.7,102.1 974.4,107.0 965.7,111.9 957.0,107.0" fill="#d7ecf7" stroke="#9aa" stroke-width="1" stroke-linejoin="round"/><polygon points="957.0,107.0 965.7,111.9 965.7,121.7 957.0,116.8" fill="#a9d6ef" stroke="#9aa" stroke-width="1" stroke-linejoin="round"/><polygon points="965.7,111.9 974.4,107.0 974.4,116.8 965.7,121.7" fill="#c4e3f5" stroke="#9aa" stroke-width="1" stroke-linejoin="round"/><circle cx="965.7" cy="102.10000000000001" r="1.9" fill="#8a8f94"/><circle cx="974.4000000000001" cy="107.0" r="1.9" fill="#8a8f94"/><circle cx="974.4000000000001" cy="116.80000000000001" r="1.9" fill="#8a8f94"/><circle cx="965.7" cy="121.7" r="1.9" fill="#8a8f94"/><circle cx="957.0" cy="116.80000000000001" r="1.9" fill="#8a8f94"/><circle cx="957.0" cy="107.0" r="1.9" fill="#8a8f94"/><circle cx="965.7" cy="111.9" r="1.9" fill="#8a8f94"/><polygon points="1019.6,103.1 1027.2,107.5 1019.6,111.9 1012.0,107.5" fill="#fff" stroke="#111" stroke-width="1.6" stroke-linejoin="round"/><polygon points="1012.0,107.5 1019.6,111.9 1019.6,120.7 1012.0,116.3" fill="#26a3dc" stroke="#111" stroke-width="1.6" stroke-linejoin="round"/><polygon points="1019.6,111.9 1027.2,107.5 1027.2,116.3 1019.6,120.7" fill="#fff" stroke="#111" stroke-width="1.6" stroke-linejoin="round"/><circle cx="1019.6" cy="103.10000000000001" r="1.9" fill="#111"/><circle cx="1027.2" cy="107.5" r="1.9" fill="#111"/><circle cx="1027.2" cy="116.30000000000001" r="1.9" fill="#111"/><circle cx="1019.6" cy="120.7" r="1.9" fill="#111"/><circle cx="1012.0" cy="116.30000000000001" r="1.9" fill="#111"/><circle cx="1012.0" cy="107.5" r="1.9" fill="#111"/><circle cx="1019.6" cy="111.9" r="1.9" fill="#111"/><polygon points="1073.7,103.1 1081.3,107.5 1073.7,111.9 1066.1,107.5" fill="none" stroke="#8fcbea" stroke-width="0.9" stroke-linejoin="round"/><polygon points="1066.1,107.5 1073.7,111.9 1073.7,120.7 1066.1,116.3" fill="none" stroke="#8fcbea" stroke-width="0.9" stroke-linejoin="round"/><polygon points="1073.7,111.9 1081.3,107.5 1081.3,116.3 1073.7,120.7" fill="none" stroke="#8fcbea" stroke-width="0.9" stroke-linejoin="round"/><circle cx="1073.7" cy="103.10000000000001" r="1.7" fill="#8a8f94"/><circle cx="1081.3" cy="107.5" r="1.7" fill="#8a8f94"/><circle cx="1081.3" cy="116.30000000000001" r="1.7" fill="#8a8f94"/><circle cx="1073.7" cy="120.7" r="1.7" fill="#8a8f94"/><circle cx="1066.1000000000001" cy="116.30000000000001" r="1.7" fill="#8a8f94"/><circle cx="1066.1000000000001" cy="107.5" r="1.7" fill="#8a8f94"/><circle cx="1073.7" cy="111.9" r="1.7" fill="#8a8f94"/><polygon points="1126.6,102.8 1134.2,107.2 1126.6,111.6 1119.0,107.2" fill="none" stroke="#999" stroke-width="0.9" stroke-linejoin="round"/><polygon points="1119.0,107.2 1126.6,111.6 1126.6,120.4 1119.0,116.0" fill="none" stroke="#999" stroke-width="0.9" stroke-linejoin="round"/><polygon points="1126.6,111.6 1134.2,107.2 1134.2,116.0 1126.6,120.4" fill="none" stroke="#999" stroke-width="0.9" stroke-linejoin="round"/><circle cx="1126.6" cy="102.8" r="1.6" fill="#9fd4f0"/><circle cx="1134.1999999999998" cy="107.19999999999999" r="1.6" fill="#9fd4f0"/><circle cx="1134.1999999999998" cy="116.0" r="1.6" fill="#9fd4f0"/><circle cx="1126.6" cy="120.39999999999999" r="1.6" fill="#9fd4f0"/><circle cx="1119.0" cy="116.0" r="1.6" fill="#9fd4f0"/><circle cx="1119.0" cy="107.19999999999999" r="1.6" fill="#9fd4f0"/><circle cx="1126.6" cy="111.6" r="1.6" fill="#9fd4f0"/><circle cx="1182.5" cy="105.6" r="5.6" fill="#3a3a3e"/><path d="M1182.5,110v11" stroke="#3a3a3e" stroke-width="1.2"/><circle cx="1182.5" cy="121.6" r="1.6" fill="#3a3a3e"/><rect x="1228.3" y="104.4" width="15" height="11.4" fill="none" stroke="#222" stroke-width="1.5" stroke-dasharray="3,2"/><path d="M1240.5,112.5 l0,9.5 l2.2,-2.2 l1.8,3.5 l1.4,-0.8 l-1.8,-3.4 l3,-0.2z" fill="#111"/><polygon points="1289.0,102.0 1296.3,106.4 1289.0,110.8 1281.7,106.4" fill="#eee" stroke="#bbb" stroke-width="1" stroke-linejoin="round"/><polygon points="1281.7,106.4 1289.0,110.8 1289.0,119.6 1281.7,115.2" fill="#e4e4e4" stroke="#bbb" stroke-width="1" stroke-linejoin="round"/><polygon points="1289.0,110.8 1296.3,106.4 1296.3,115.2 1289.0,119.6" fill="#dedede" stroke="#bbb" stroke-width="1" stroke-linejoin="round"/><circle cx="1289" cy="102.0" r="1.5" fill="#b5b5b5"/><circle cx="1296.3" cy="106.39999999999999" r="1.5" fill="#b5b5b5"/><circle cx="1296.3" cy="115.2" r="1.5" fill="#b5b5b5"/><circle cx="1289" cy="119.6" r="1.5" fill="#b5b5b5"/><circle cx="1281.7" cy="115.2" r="1.5" fill="#b5b5b5"/><circle cx="1281.7" cy="106.39999999999999" r="1.5" fill="#b5b5b5"/><circle cx="1289" cy="110.8" r="1.5" fill="#b5b5b5"/><path d="M1339,104 q2,-5 8,-6 l4,2 v11 l-9,5 v-9 q-1,-4 -3,-3z M1339,104 v9 l-6,4 l-2.5,-1.5 l8,-4.5" fill="none" stroke="#333" stroke-width="1.1"/><path d="M1330.5,116l3,1.8l3,-1.8M1333,119.5l8,-4.5" fill="none" stroke="#333" stroke-width="1"/><path d="M666.2,106.2L676,116M676,106.2L666.2,116" stroke="#4a4a52" stroke-width="1.1"/><circle cx="664.3" cy="210.2" r="9" fill="#fff" stroke="#d4d4d4" stroke-width="1.3"/><path d="M661,206.9l6.6,6.6M667.6,206.9l-6.6,6.6" stroke="#4a4650" stroke-width="1.2"/><path d="M290,441.6h14.4M294.3,441.3q0,-2 1.5,-2h3q1.5,0 1.5,2M291.4,442.4l0.6,11.3q0.1,1 1.1,1h9.2q1,0 1.1,-1l0.6,-11.3" fill="none" stroke="#5a5660" stroke-width="1.1"/><path d="M293.9,444.2v7.5M296.9,444.2v7.5M299.9,444.2v7.5" stroke="#a9a9ab" stroke-width="1.6"/><polygon points="-2,103 4,100 9,103 9,110 4,113 -2,110" fill="#d5d5d5" stroke="#c0c0c0" stroke-width="0.8"/><polygon points="-2,108 4,105 9,108 9,115 4,118 -2,115" fill="#c8c8c8" stroke="#b5b5b5" stroke-width="0.8"/><path d="M257.5,145v18M260.5,145v18" stroke="#d0d0d0" stroke-width="1"/><path d="M1544,229v18M1547,229v18" stroke="#c8c8c8" stroke-width="1"/><path d="M1567,102l3,3" stroke="#555" stroke-width="1.2"/><rect x="1568.5" y="139.5" width="5" height="12" fill="#fff" stroke="#ccc"/></svg>
<div class="badge" style="left:64px;top:52px">1</div>
<div class="badge" style="left:468px;top:191px">2</div>
<div class="badge" style="left:528px;top:278px">3</div>
<div class="badge" style="left:528px;top:364px">4</div>
<div class="badge" style="left:522px;top:428px">5</div>

</body></html>
